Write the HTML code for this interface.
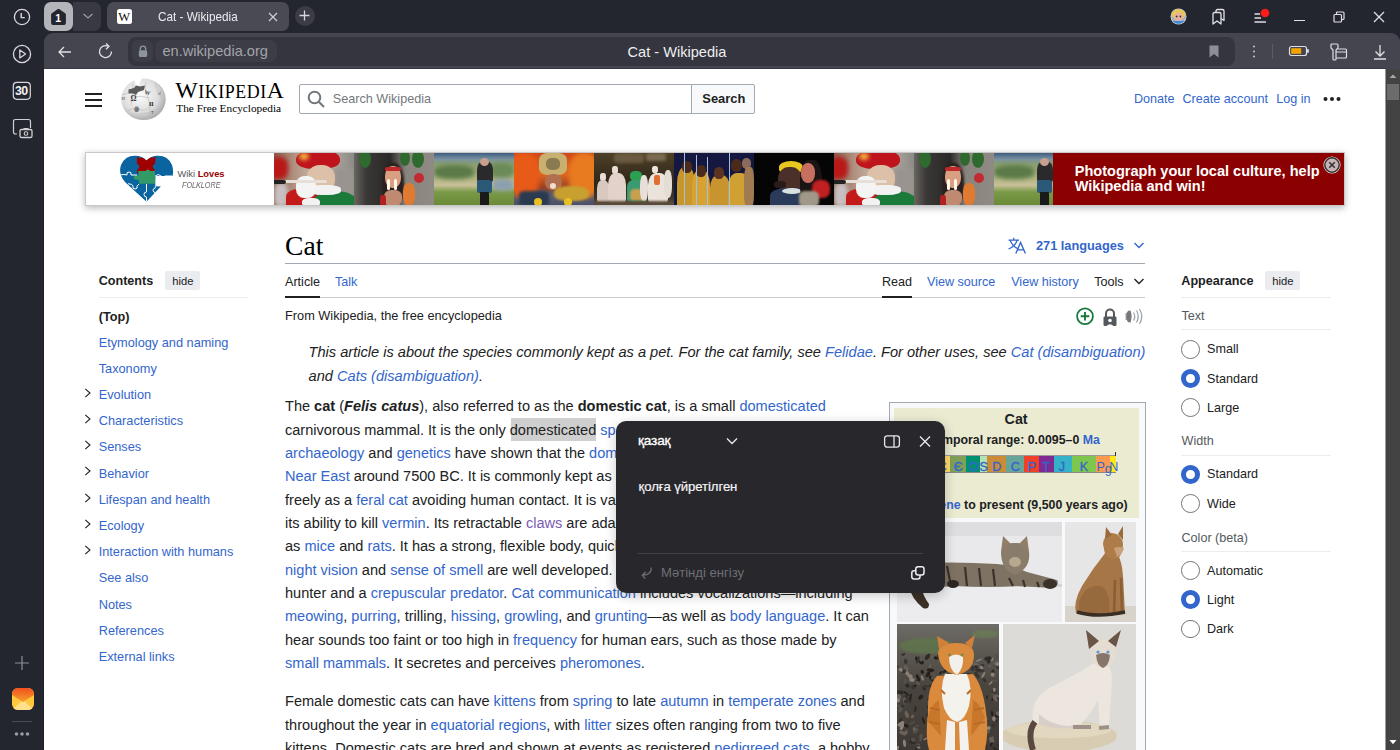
<!DOCTYPE html>
<html><head><meta charset="utf-8"><style>
*{box-sizing:border-box;margin:0;padding:0}
html,body{width:1400px;height:750px;overflow:hidden;background:#23262f;font-family:"Liberation Sans",sans-serif;color:#202122}
.a{position:absolute}
.nw{white-space:nowrap}
.lk{color:#3366cc}
.vl{color:#795cb2}
b{font-weight:bold}
</style></head><body>
<div class="a" style="left:0px;top:0px;width:1400px;height:750px;background:#23262f"></div>
<div class="a" style="left:44px;top:33px;width:1356px;height:36px;background:#45454f;border-radius:9px 9px 0 0"></div>
<div class="a" style="left:44px;top:69px;width:1342px;height:681px;background:#fff"></div>
<div class="a" style="left:1386px;top:69px;width:14px;height:681px;background:#434343"></div>
<div class="a" style="left:1385px;top:69px;width:1px;height:681px;background:#9a9a9a"></div>
<div class="a" style="left:1387px;top:84px;width:12px;height:16px;background:#6c6c6c"></div>
<svg class="a" style="left:1387px;top:71px;" width="12" height="10" viewBox="0 0 12 10"><path d="M2.5 7 L6 3.5 L9.5 7 Z" fill="#a8a8a8"/></svg>
<svg class="a" style="left:1387px;top:738px;" width="12" height="10" viewBox="0 0 12 10"><path d="M2.5 2 L6 6.2 L9.5 2 Z" fill="#fff"/></svg>
<div class="a" style="left:43px;top:69px;width:1px;height:681px;background:#1e2029"></div>
<div class="a" style="left:44px;top:68px;width:1342px;height:1px;background:#383942"></div>
<svg class="a" style="left:10px;top:5px;" width="24" height="24" viewBox="0 0 24 24"><circle cx="12" cy="12" r="7.6" fill="none" stroke="#d8d8dc" stroke-width="1.3"/><path d="M11.2 8 V12.6 H14.8" fill="none" stroke="#d8d8dc" stroke-width="1.4"/></svg>
<svg class="a" style="left:10px;top:42px;" width="24" height="24" viewBox="0 0 24 24"><circle cx="12" cy="12" r="8.6" fill="none" stroke="#d8d8dc" stroke-width="1.3"/><path d="M9.8 8 L15.6 12 L9.8 16 Z" fill="none" stroke="#d8d8dc" stroke-width="1.3" stroke-linejoin="round"/></svg>
<svg class="a" style="left:12px;top:81px;" width="20" height="20" viewBox="0 0 20 20"><rect x="1.3" y="1.3" width="17" height="17" rx="3.5" fill="none" stroke="#d8d8dc" stroke-width="1.2"/></svg>
<div class="a nw " style="left:15.00px;top:81.30px;font-size:12.4px;line-height:20px;font-family:'Liberation Sans',sans-serif;color:#f0f0f2;font-weight:bold;letter-spacing:-0.6px">30</div>
<svg class="a" style="left:11px;top:117px;" width="24" height="22" viewBox="0 0 24 22"><path d="M6 17 H4.5 Q2.5 17 2.5 15 V4.5 Q2.5 2.5 4.5 2.5 H17.5 Q19.5 2.5 19.5 4.5 V11" fill="none" stroke="#cfcfd3" stroke-width="1.2"/><rect x="9" y="12.5" width="12" height="8" rx="1.6" fill="#23262f" stroke="#cfcfd3" stroke-width="1.3"/><rect x="12.5" y="11" width="5" height="2" fill="#cfcfd3"/><circle cx="15" cy="16.5" r="1.8" fill="none" stroke="#cfcfd3" stroke-width="1.1"/></svg>
<svg class="a" style="left:14px;top:655px;" width="16" height="16" viewBox="0 0 16 16"><path d="M8 1 V15 M1 8 H15" stroke="#8e8f95" stroke-width="1.2"/></svg>
<svg class="a" style="left:11.5px;top:687.5px;" width="22" height="22" viewBox="0 0 22 22"><defs><clipPath id="mlc"><rect width="22" height="22" rx="6"/></clipPath><linearGradient id="mlg" x1="0" y1="0" x2="0" y2="1"><stop offset="0" stop-color="#f0501e"/><stop offset="1" stop-color="#f7a02c"/></linearGradient></defs><g clip-path="url(#mlc)"><rect width="22" height="22" fill="#ffc83c"/><path d="M0 22 L11 12 L22 22 Z" fill="#ffe08a"/><path d="M0 0 H22 V7 L11 14 L0 7 Z" fill="url(#mlg)"/></g></svg>
<div class="a" style="left:12px;top:721px;width:20px;height:1px;background:#4a4c55"></div>
<svg class="a" style="left:13px;top:729px;" width="18" height="10" viewBox="0 0 18 10"><circle cx="3.5" cy="5" r="1.8" fill="#9a9ba0"/><circle cx="9" cy="5" r="1.8" fill="#9a9ba0"/><circle cx="14.5" cy="5" r="1.8" fill="#9a9ba0"/></svg>
<div class="a" style="left:44px;top:2px;width:29px;height:28.5px;background:#b4b5ba;border-radius:7px"></div>
<div class="a" style="left:73px;top:2px;width:28px;height:28.5px;background:#383943;border-radius:0 7px 7px 0"></div>
<svg class="a" style="left:50px;top:8px;" width="17" height="18" viewBox="0 0 17 18"><path d="M8.5 2 L14.8 6.5 V14.5 Q14.8 16 13.3 16 H3.7 Q2.2 16 2.2 14.5 V6.5 Z" fill="#23262f" stroke="#23262f" stroke-width="2.2" stroke-linejoin="round"/></svg>
<div class="a nw " style="left:55.30px;top:7.66px;font-size:10.5px;line-height:20px;font-family:'Liberation Sans',sans-serif;color:#fff;font-weight:bold">1</div>
<svg class="a" style="left:82px;top:12px;" width="12" height="8" viewBox="0 0 12 8"><path d="M1.5 2 L6 6 L10.5 2" fill="none" stroke="#9c9ca3" stroke-width="1.2"/></svg>
<div class="a" style="left:106.5px;top:2px;width:182.5px;height:29px;background:#4a4a54;border-radius:7px"></div>
<div class="a" style="left:117px;top:9px;width:15px;height:15px;background:#fff;border-radius:2.5px"></div>
<div class="a nw " style="left:118.20px;top:6.78px;font-size:12.5px;line-height:20px;font-family:'Liberation Serif',serif;color:#111;font-family:'Liberation Serif',serif">W</div>
<div class="a nw " style="left:157.50px;top:6.75px;font-size:13.4px;line-height:20px;font-family:'Liberation Sans',sans-serif;color:#ececf0;transform:scaleX(0.878);transform-origin:0 0">Cat - Wikipedia</div>
<svg class="a" style="left:267px;top:11px;" width="12" height="12" viewBox="0 0 12 12"><path d="M2 2 L10 10 M10 2 L2 10" stroke="#d0d0d4" stroke-width="1.2"/></svg>
<div class="a" style="left:294.5px;top:5.5px;width:20px;height:20px;border-radius:50%;background:#3b3c45"></div>
<svg class="a" style="left:297px;top:8px;" width="15" height="15" viewBox="0 0 15 15"><path d="M7.5 2.5 V12.5 M2.5 7.5 H12.5" stroke="#d8d8dc" stroke-width="1.3"/></svg>
<svg class="a" style="left:1170px;top:8px;" width="17" height="17" viewBox="0 0 17 17"><defs><clipPath id="avc"><circle cx="8.5" cy="8.5" r="7.3"/></clipPath></defs><circle cx="8.5" cy="8.5" r="8" fill="#d8d4c8"/><g clip-path="url(#avc)"><rect width="17" height="17" fill="#9ab0c8"/><ellipse cx="8.5" cy="6" rx="7" ry="6" fill="#e8c850"/><ellipse cx="8.5" cy="9" rx="4.6" ry="4.4" fill="#e8b0a0"/><circle cx="6.6" cy="8.5" r="0.9" fill="#333"/><circle cx="10.4" cy="8.5" r="0.9" fill="#333"/><rect x="3" y="13" width="11" height="5" fill="#3a8ad8"/></g></svg>
<svg class="a" style="left:1209px;top:8px;" width="18" height="18" viewBox="0 0 18 18"><path d="M4 16 V6 Q4 4.5 5.5 4.5 H10.5 Q12 4.5 12 6 V16 L8 13 Z" fill="none" stroke="#e0e0e4" stroke-width="1.3" stroke-linejoin="round"/><path d="M7 4.5 V3 Q7 1.5 8.5 1.5 H13.5 Q15 1.5 15 3 V12.5 L12 10.5" fill="none" stroke="#e0e0e4" stroke-width="1.3" stroke-linejoin="round"/></svg>
<svg class="a" style="left:1252px;top:6px;" width="22" height="18" viewBox="0 0 22 18"><path d="M2.5 8 H8 M2.5 12 H9 M2.5 16 H14" stroke="#e0e0e4" stroke-width="1.3"/><circle cx="13" cy="7" r="4.3" fill="#ff1a1a"/></svg>
<div class="a" style="left:1294px;top:20px;width:11px;height:1.3px;background:#e0e0e4"></div>
<svg class="a" style="left:1332px;top:10px;" width="14" height="14" viewBox="0 0 14 14"><rect x="2" y="4.5" width="7.5" height="7.5" rx="1" fill="none" stroke="#e0e0e4" stroke-width="1.2"/><path d="M4.5 4.5 V3 Q4.5 2 5.5 2 H11 Q12 2 12 3 V8.5 Q12 9.5 11 9.5 H9.5" fill="none" stroke="#e0e0e4" stroke-width="1.2"/></svg>
<svg class="a" style="left:1372px;top:10px;" width="14" height="14" viewBox="0 0 14 14"><path d="M2 2 L12 12 M12 2 L2 12" stroke="#e0e0e4" stroke-width="1.3"/></svg>
<svg class="a" style="left:56px;top:43px;" width="18" height="18" viewBox="0 0 18 18"><path d="M15 9 H3 M8 4 L3 9 L8 14" fill="none" stroke="#e0e0e4" stroke-width="1.3"/></svg>
<svg class="a" style="left:96px;top:42px;" width="20" height="20" viewBox="0 0 20 20"><path d="M15.5 9.5 A6 6 0 1 1 12 4.2" fill="none" stroke="#e0e0e4" stroke-width="1.3"/><path d="M10 1.5 L13 4.3 L10 7.2" fill="none" stroke="#e0e0e4" stroke-width="1.3"/></svg>
<div class="a" style="left:128px;top:37px;width:1107px;height:28.5px;background:#34353e;border-radius:8px"></div>
<div class="a" style="left:132px;top:40px;width:21px;height:22.3px;background:#3c3d46;border-radius:6px"></div>
<div class="a" style="left:155px;top:40px;width:122px;height:22.3px;background:#3c3d46;border-radius:7px"></div>
<svg class="a" style="left:136px;top:44px;" width="14" height="14" viewBox="0 0 14 14"><path d="M4.3 6.5 V4.8 A2.7 2.7 0 0 1 9.7 4.8 V6.5" fill="none" stroke="#8d949c" stroke-width="1.4"/><rect x="2.8" y="6.3" width="8.4" height="6.8" rx="1.5" fill="#8d949c"/></svg>
<div class="a nw " style="left:162.50px;top:41.44px;font-size:14.6px;line-height:20px;font-family:'Liberation Sans',sans-serif;color:#a3a4aa">en.wikipedia.org</div>
<div class="a nw " style="left:627.50px;top:42.44px;font-size:14.6px;line-height:20px;font-family:'Liberation Sans',sans-serif;color:#eeeef0">Cat - Wikipedia</div>
<svg class="a" style="left:1207px;top:44px;" width="14" height="15" viewBox="0 0 14 15"><path d="M2.5 1.5 H11.5 V13.5 L7 10 L2.5 13.5 Z" fill="#8e8f96"/></svg>
<svg class="a" style="left:1250px;top:44px;" width="8" height="15" viewBox="0 0 8 15"><circle cx="4" cy="2.5" r="1" fill="#c8c8cc"/><circle cx="4" cy="7.5" r="1" fill="#c8c8cc"/><circle cx="4" cy="12.5" r="1" fill="#c8c8cc"/></svg>
<div class="a" style="left:1272px;top:44px;width:1px;height:15px;background:#5a5b64"></div>
<svg class="a" style="left:1288px;top:44px;" width="22" height="14" viewBox="0 0 22 14"><rect x="1.5" y="2.5" width="17" height="9" rx="2" fill="none" stroke="#e0e0e4" stroke-width="1.2"/><rect x="3.2" y="4.2" width="10" height="5.6" fill="#f5a300"/><rect x="19" y="5.3" width="1.8" height="3.4" fill="#e0e0e4"/></svg>
<svg class="a" style="left:1328px;top:42px;" width="20" height="20" viewBox="0 0 20 20"><path d="M3 3 Q3 2 4 2 H9 Q10 2 10 3 V6 L8 8 V17 Q8 18 7 18 H6 Q5 18 5 17 V8 L3 6 Z" fill="none" stroke="#e0e0e4" stroke-width="1.2"/><path d="M10 7 H17.5 Q18.5 7 18.5 8 V15 Q18.5 16 17.5 16 H8 M8 10 H18.5" fill="none" stroke="#e0e0e4" stroke-width="1.2"/></svg>
<svg class="a" style="left:1371px;top:43px;" width="18" height="18" viewBox="0 0 18 18"><path d="M9 2 V13 M4.5 8.5 L9 13 L13.5 8.5 M3 16 H15" fill="none" stroke="#e0e0e4" stroke-width="1.3"/></svg>
<div class="a" style="left:84.5px;top:92.5px;width:17px;height:2px;background:#202122"></div>
<div class="a" style="left:84.5px;top:98.5px;width:17px;height:2px;background:#202122"></div>
<div class="a" style="left:84.5px;top:104.5px;width:17px;height:2px;background:#202122"></div>
<svg class="a" style="left:119px;top:77px" width="48" height="46" viewBox="0 0 48 46">
<defs><radialGradient id="gg" cx="0.42" cy="0.4" r="0.68"><stop offset="0" stop-color="#fbfbfb"/><stop offset="0.6" stop-color="#dedede"/><stop offset="1" stop-color="#9a9a9a"/></radialGradient></defs>
<ellipse cx="24.5" cy="22.3" rx="22.2" ry="20.8" fill="url(#gg)"/>
<path d="M14.5 0.5 L16.8 8.5 L19.8 8.5 L23.5 0.5 Z" fill="#fff"/>
<path d="M3 18 Q9 17 12 13 M8 34 Q14 30 20 32 Q26 35 30 30 M27 5 Q25 14 29 21 Q33 30 29 42 M14 7 Q15 18 12 28 M36 6 Q38 15 43 22 M14 20 Q22 18 30 21 M20 37 Q30 35 41 36" fill="none" stroke="#bdbdbd" stroke-width="0.7"/>
<path d="M9.5 12.5 L15 11 L17 8.5 L21 9.5 L26 8.5 L25 13 L19 15 L17 18 L14 16.5 L9.5 16.5 Z" fill="#5a5a5a"/>
<text x="11.5" y="23.8" font-family="Liberation Serif" font-size="7.5" font-weight="bold" fill="#3a3a3a">Ω</text>
<text x="25.5" y="17.5" font-family="Liberation Serif" font-size="6" font-weight="bold" fill="#555" transform="rotate(15 28 15)">W</text>
<text x="30" y="28.5" font-family="Liberation Serif" font-size="8" font-weight="bold" fill="#333">ıı</text>
<text x="15" y="33.5" font-family="Liberation Serif" font-size="6" font-weight="bold" fill="#555">ꙮ</text>
<text x="32" y="36.5" font-family="Liberation Serif" font-size="5" font-weight="bold" fill="#444">7</text>
<text x="2.5" y="22.5" font-family="Liberation Serif" font-size="5" fill="#666">И</text>
<text x="39" y="18" font-family="Liberation Serif" font-size="5" fill="#777">Ꮷ</text>
</svg>
<div class="a nw " style="left:175.30px;top:80.47px;font-size:23.8px;line-height:20px;font-family:'Liberation Serif',serif;color:#000;letter-spacing:0.55px">W<span style="font-size:17.9px">IKIPEDI</span>A</div>
<div class="a nw " style="left:176.30px;top:98.19px;font-size:11.3px;line-height:20px;font-family:'Liberation Serif',serif;color:#000">The Free Encyclopedia</div>
<div class="a" style="left:299px;top:84px;width:393px;height:30px;border:1px solid #a2a9b1;border-radius:2px 0 0 2px;background:#fff"></div>
<svg class="a" style="left:306px;top:89px;" width="22" height="22" viewBox="0 0 22 22"><circle cx="8.5" cy="8.5" r="5.8" fill="none" stroke="#72777d" stroke-width="2"/><path d="M12.8 12.8 L18 18" stroke="#72777d" stroke-width="2"/></svg>
<div class="a nw " style="left:332.80px;top:89.12px;font-size:12.63px;line-height:20px;font-family:'Liberation Sans',sans-serif;color:#72777d">Search Wikipedia</div>
<div class="a" style="left:691px;top:84px;width:64px;height:30px;border:1px solid #a2a9b1;border-radius:0 2px 2px 0;background:#f8f9fa"></div>
<div class="a nw " style="left:702.30px;top:89.03px;font-size:12.9px;line-height:20px;font-family:'Liberation Sans',sans-serif;color:#202122;font-weight:bold">Search</div>
<div class="a nw lk" style="left:1134.00px;top:89.13px;font-size:12.6px;line-height:20px;font-family:'Liberation Sans',sans-serif;">Donate</div>
<div class="a nw lk" style="left:1182.50px;top:89.13px;font-size:12.6px;line-height:20px;font-family:'Liberation Sans',sans-serif;">Create account</div>
<div class="a nw lk" style="left:1276.30px;top:89.13px;font-size:12.6px;line-height:20px;font-family:'Liberation Sans',sans-serif;">Log in</div>
<svg class="a" style="left:1322px;top:94px;" width="20" height="10" viewBox="0 0 20 10"><circle cx="3.5" cy="5" r="2" fill="#202122"/><circle cx="10" cy="5" r="2" fill="#202122"/><circle cx="16.5" cy="5" r="2" fill="#202122"/></svg>
<div class="a" style="left:84.5px;top:151.5px;width:1260.5px;height:54.5px;background:#fff;border:1px solid #c8c8c8;box-shadow:0 2px 7px rgba(0,0,0,0.28)"></div>
<svg class="a" style="left:119px;top:154px" width="56" height="50" viewBox="0 0 56 50">
<defs><clipPath id="hc"><path d="M27.5 47.8 L6 28 Q-1 20 2 11 Q6 1.5 16.5 1.8 Q23 2 27.5 6.5 Q32 2 38.5 1.8 Q49 1.5 53 11 Q55 17 53.5 22 L36.3 22 L36.3 32.2 L42 32.2 Z"/></clipPath></defs>
<g clip-path="url(#hc)">
<rect width="56" height="50" fill="#0a64a0"/>
<path d="M17.8 3 Q22 5 24 3 Q27 6 31 3 Q34 4 36.7 3 L36 10 Q33 11 34 13.5 Q36 15 36 19 L30 19 Q29 22 26 22 Q23 21 24 19 L18 19 Q18 15 20 13.5 Q21 11 18 10 Z" fill="#a00000"/>
<path d="M19 17 L27 17 Q27 15 29 15.5 Q31 16 31 17 L36 17 L36 21 Q39 21 39 23.5 Q39 26 36 26 L36 29.7 L20 29.7 L20 26 Q14.5 26 14.5 23.5 Q14.5 21 20 21 Z" fill="#339966"/>
<path d="M0 21 Q6 20 8 21 Q7 18 10 18 Q13 18 12 21 L18 21 M9 29.7 Q14 30 14 32 Q13 35 16 35 Q19 35 18 32 L20 30 M27.5 30 L27.5 38 Q25 38 25 40.5 Q25 43 27.5 43 L27.5 50 M36.3 22 Q39 19 42 22 Q44 25 46 22 L53 22 M36.3 32.2 L36.3 34 Q34 34.5 34 36.5 Q34.5 39 37 38.5 L40 37" fill="none" stroke="#fff" stroke-width="1"/>
</g>
<path d="M38 32.2 L42.5 32.2 L45 29.5 L41 29.5 Q40 26 42 24 L52 22 Z" fill="#fff"/>
</svg>
<div class="a nw " style="left:177.50px;top:164.28px;font-size:9.3px;line-height:20px;font-family:'Liberation Sans',sans-serif;color:#555">Wiki <b style="color:#990000">Loves</b></div>
<div class="a nw " style="left:182.30px;top:175.02px;font-size:8.6px;line-height:20px;font-family:'Liberation Sans',sans-serif;color:#666;font-style:italic;transform:scaleX(0.84);transform-origin:0 0">FOLKLORE</div>
<div class="a" style="left:274.3px;top:152.5px;width:80px;height:52.5px;background:linear-gradient(90deg,#8a5a4a 0%,#b09080 25%,#c8b8a8 50%,#a8a098 80%,#8a8a88 100%);overflow:hidden"><div class="a" style="left:-4px;top:4px;width:18px;height:22px;background:#b81818;border-radius:40%;filter:blur(2px);"></div><div class="a" style="left:0px;top:30px;width:14px;height:24px;background:#c8c0c0;border-radius:30%;filter:blur(2px);"></div><div class="a" style="left:60px;top:15px;width:20px;height:40px;background:#9a9490;border-radius:10%;filter:blur(2px);"></div><div class="a" style="left:22px;top:-4px;width:44px;height:20px;background:#c0141c;border-radius:50% 50% 40% 40%;filter:blur(0.6px);"></div><div class="a" style="left:33px;top:12px;width:28px;height:27px;background:#dcc0a8;border-radius:45%;filter:blur(0.6px);"></div><div class="a" style="left:12px;top:36px;width:32px;height:20px;background:#c41a1a;border-radius:40% 40% 0 0;filter:blur(0.6px);"></div><div class="a" style="left:40px;top:38px;width:42px;height:18px;background:#1a7a3a;border-radius:50% 50% 0 0;filter:blur(0.6px);"></div><div class="a" style="left:35px;top:32px;width:32px;height:10px;background:#f2f2f2;border-radius:40%;filter:blur(0.6px);"></div><div class="a" style="left:22px;top:23px;width:20px;height:22px;background:#f4f4f4;border-radius:40%;filter:blur(0.6px);"></div><div class="a" style="left:3px;top:27px;width:50px;height:3px;background:#e8e0d8;border-radius:2px;filter:blur(0.3px);"></div><div class="a" style="left:28px;top:45px;width:18px;height:9px;background:#f2f2f2;border-radius:40%;filter:blur(0.6px);"></div><div class="a" style="left:-2px;top:27px;width:14px;height:4px;background:#222;border-radius:2px;filter:blur(0.4px);"></div><div class="a" style="left:25px;top:0px;width:10px;height:7px;background:#f0c040;border-radius:50%;filter:blur(2px);"></div></div>
<div class="a" style="left:354.4px;top:152.5px;width:80px;height:52.5px;background:linear-gradient(90deg,#6a6660 0%,#3a3836 15%,#2a2826 45%,#8a847e 65%,#908a84 100%);overflow:hidden"><div class="a" style="left:5px;top:-3px;width:12px;height:18px;background:#2e6a2e;border-radius:50%;filter:blur(0.6px);"></div><div class="a" style="left:46px;top:-3px;width:10px;height:16px;background:#2e6a2e;border-radius:50%;filter:blur(0.6px);"></div><div class="a" style="left:58px;top:-3px;width:12px;height:18px;background:#2e6a2e;border-radius:50%;filter:blur(0.6px);"></div><div class="a" style="left:28px;top:10px;width:22px;height:44px;background:#2a2020;border-radius:45%;filter:blur(1px);"></div><div class="a" style="left:31px;top:13px;width:16px;height:22px;background:#d8a080;border-radius:45%;filter:blur(0.6px);"></div><div class="a" style="left:31px;top:14px;width:16px;height:4px;background:#c02a2a;border-radius:30%;filter:blur(0.4px);"></div><div class="a" style="left:33px;top:26px;width:3px;height:11px;background:#fff8e8;border-radius:2px;filter:blur(0.4px);"></div><div class="a" style="left:40px;top:26px;width:3px;height:11px;background:#fff8e8;border-radius:2px;filter:blur(0.4px);"></div><div class="a" style="left:30px;top:37px;width:18px;height:16px;background:#c08a70;border-radius:40%;filter:blur(0.6px);"></div><div class="a" style="left:49px;top:30px;width:12px;height:22px;background:#e07a30;border-radius:40%;filter:blur(0.6px);"></div><div class="a" style="left:60px;top:20px;width:10px;height:10px;background:#c02a30;border-radius:50%;filter:blur(0.6px);"></div><div class="a" style="left:26px;top:42px;width:6px;height:12px;background:#b02020;border-radius:30%;filter:blur(0.6px);"></div></div>
<div class="a" style="left:434px;top:152.5px;width:80px;height:52.5px;background:linear-gradient(180deg,#3e5e80 0%,#7a92a0 12%,#8aa070 22%,#a8b078 45%,#c8c098 62%,#7a9a48 75%,#6a8a38 100%);overflow:hidden"><div class="a" style="left:0px;top:12px;width:40px;height:14px;background:#5a7a48;border-radius:40%;filter:blur(2px);"></div><div class="a" style="left:55px;top:10px;width:25px;height:15px;background:#6a8a58;border-radius:40%;filter:blur(2px);"></div><div class="a" style="left:58px;top:26px;width:22px;height:12px;background:#8aa0b0;border-radius:40%;filter:blur(2px);"></div><div class="a" style="left:43px;top:8px;width:16px;height:22px;background:#2a2a2c;border-radius:40% 40% 20% 20%;filter:blur(0.6px);"></div><div class="a" style="left:46px;top:5px;width:9px;height:8px;background:#c8a090;border-radius:50%;filter:blur(0.6px);"></div><div class="a" style="left:43px;top:27px;width:15px;height:13px;background:#2a5a78;border-radius:20%;filter:blur(0.6px);"></div><div class="a" style="left:46px;top:39px;width:9px;height:14px;background:#1a1a1a;border-radius:10%;filter:blur(0.5px);"></div></div>
<div class="a" style="left:513.8px;top:152.5px;width:80px;height:52.5px;background:linear-gradient(180deg,#d04818 0%,#e06a20 40%,#a04020 65%,#5a6070 80%,#4a5068 100%);overflow:hidden"><div class="a" style="left:-5px;top:0px;width:30px;height:45px;background:#e85a18;border-radius:40%;filter:blur(2px);"></div><div class="a" style="left:55px;top:0px;width:30px;height:45px;background:#e87a20;border-radius:40%;filter:blur(2px);"></div><div class="a" style="left:25px;top:0px;width:28px;height:22px;background:#c8b070;border-radius:30%;filter:blur(0.6px);"></div><div class="a" style="left:32px;top:5px;width:14px;height:12px;background:#8a7a50;border-radius:40%;filter:blur(0.6px);"></div><div class="a" style="left:31px;top:21px;width:17px;height:16px;background:#b07050;border-radius:45%;filter:blur(0.6px);"></div><div class="a" style="left:36px;top:30px;width:6px;height:6px;background:#f0e0d0;border-radius:50%;filter:blur(0.5px);"></div><div class="a" style="left:40px;top:33px;width:35px;height:15px;background:#c8a030;border-radius:40%;filter:blur(1.2px);"></div><div class="a" style="left:5px;top:38px;width:30px;height:15px;background:#2a3a50;border-radius:20%;filter:blur(1.5px);"></div><div class="a" style="left:20px;top:45px;width:8px;height:8px;background:#e8c020;border-radius:50%;filter:blur(0.6px);"></div><div class="a" style="left:50px;top:45px;width:8px;height:8px;background:#e8c020;border-radius:50%;filter:blur(0.6px);"></div></div>
<div class="a" style="left:593.8px;top:152.5px;width:80px;height:52.5px;background:linear-gradient(180deg,#4e4026 0%,#3e3220 30%,#2e2618 60%,#3a3428 85%,#5a5040 100%);overflow:hidden"><div class="a" style="left:20px;top:0px;width:30px;height:10px;background:#6a5a40;border-radius:20%;filter:blur(1.5px);"></div><div class="a" style="left:52px;top:0px;width:20px;height:8px;background:#7a6a50;border-radius:20%;filter:blur(1.5px);"></div><div class="a" style="left:6px;top:20px;width:6px;height:8px;background:#e8dcd4;border-radius:40%;filter:blur(0.5px);"></div><div class="a" style="left:3px;top:27px;width:12px;height:22px;background:#d8c8c0;border-radius:40% 40% 10% 10%;filter:blur(0.6px);"></div><div class="a" style="left:18px;top:13px;width:6px;height:8px;background:#e8dcd4;border-radius:40%;filter:blur(0.5px);"></div><div class="a" style="left:14px;top:20px;width:18px;height:30px;background:#e2d2ca;border-radius:40% 40% 15% 15%;filter:blur(0.6px);"></div><div class="a" style="left:36px;top:18px;width:12px;height:10px;background:#2aa050;border-radius:40%;filter:blur(0.5px);"></div><div class="a" style="left:33px;top:27px;width:20px;height:22px;background:#3a9a70;border-radius:30% 30% 10% 10%;filter:blur(0.6px);"></div><div class="a" style="left:36px;top:36px;width:16px;height:12px;background:#c8a050;border-radius:30%;filter:blur(0.8px);"></div><div class="a" style="left:46px;top:22px;width:8px;height:26px;background:#e8e0d8;border-radius:40%;filter:blur(0.6px);"></div><div class="a" style="left:58px;top:13px;width:6px;height:7px;background:#ece4dc;border-radius:40%;filter:blur(0.5px);"></div><div class="a" style="left:54px;top:20px;width:20px;height:30px;background:#ebe4dc;border-radius:40% 40% 15% 15%;filter:blur(0.6px);"></div><div class="a" style="left:60px;top:22px;width:6px;height:10px;background:#e07030;border-radius:30%;filter:blur(0.5px);"></div><div class="a" style="left:70px;top:17px;width:8px;height:28px;background:#e4ddd4;border-radius:40%;filter:blur(0.6px);"></div><div class="a" style="left:0px;top:48px;width:80px;height:6px;background:#5a4a38;border-radius:0;filter:blur(1px);"></div></div>
<div class="a" style="left:673.8px;top:152.5px;width:80px;height:52.5px;background:#141840;overflow:hidden"><div class="a" style="left:3px;top:14px;width:18px;height:40px;background:#c8962a;border-radius:40% 40% 0 0;filter:blur(0.6px);"></div><div class="a" style="left:18px;top:17px;width:18px;height:38px;background:#d8a232;border-radius:40% 40% 0 0;filter:blur(0.6px);"></div><div class="a" style="left:36px;top:22px;width:20px;height:33px;background:#c89430;border-radius:40% 40% 0 0;filter:blur(0.6px);"></div><div class="a" style="left:54px;top:20px;width:22px;height:35px;background:#d0a032;border-radius:40% 40% 0 0;filter:blur(0.6px);"></div><div class="a" style="left:8px;top:8px;width:10px;height:12px;background:#4a2a1a;border-radius:45%;filter:blur(0.5px);"></div><div class="a" style="left:22px;top:12px;width:10px;height:12px;background:#4a2a1a;border-radius:45%;filter:blur(0.5px);"></div><div class="a" style="left:40px;top:14px;width:10px;height:12px;background:#5a3420;border-radius:45%;filter:blur(0.5px);"></div><div class="a" style="left:57px;top:6px;width:11px;height:13px;background:#4a2a1a;border-radius:45%;filter:blur(0.5px);"></div><div class="a" style="left:68px;top:5px;width:9px;height:11px;background:#8a6a5a;border-radius:45%;filter:blur(0.5px);"></div><div class="a" style="left:70px;top:14px;width:10px;height:40px;background:#a07a50;border-radius:30%;filter:blur(0.6px);"></div><div class="a" style="left:10px;top:0px;width:1.5px;height:53px;background:#a0c0e0;border-radius:0;filter:blur(0.3px);"></div><div class="a" style="left:22px;top:2px;width:1.5px;height:51px;background:#a0c0e0;border-radius:0;filter:blur(0.3px);"></div><div class="a" style="left:33px;top:4px;width:1.5px;height:49px;background:#a0c0e0;border-radius:0;filter:blur(0.3px);"></div><div class="a" style="left:55px;top:0px;width:1.5px;height:53px;background:#a0c0e0;border-radius:0;filter:blur(0.3px);"></div></div>
<div class="a" style="left:753.5px;top:152.5px;width:80px;height:52.5px;background:#050506;overflow:hidden"><div class="a" style="left:25px;top:8px;width:24px;height:12px;background:#e8c820;border-radius:50% 50% 30% 30%;filter:blur(0.6px);"></div><div class="a" style="left:24px;top:14px;width:24px;height:26px;background:#4a3028;border-radius:45%;filter:blur(0.6px);"></div><div class="a" style="left:20px;top:28px;width:12px;height:7px;background:#2a1a18;border-radius:40%;filter:blur(0.5px);"></div><div class="a" style="left:16px;top:35px;width:40px;height:20px;background:#2a3a5a;border-radius:40% 40% 0 0;filter:blur(0.6px);"></div><div class="a" style="left:28px;top:35px;width:20px;height:6px;background:#d8e0e0;border-radius:50%;filter:blur(0.4px);"></div><div class="a" style="left:46px;top:7px;width:22px;height:46px;background:#1a1414;border-radius:40%;filter:blur(0.6px);"></div><div class="a" style="left:47px;top:10px;width:14px;height:20px;background:#c87060;border-radius:45%;filter:blur(0.6px);"></div><div class="a" style="left:58px;top:27px;width:18px;height:18px;background:#c02020;border-radius:40%;filter:blur(0.8px);"></div><div class="a" style="left:45px;top:38px;width:20px;height:16px;background:#a09888;border-radius:30%;filter:blur(0.8px);"></div></div>
<div class="a" style="left:833.5px;top:152.5px;width:80px;height:52.5px;background:linear-gradient(90deg,#8a5a4a 0%,#b09080 25%,#c8b8a8 50%,#a8a098 80%,#8a8a88 100%);overflow:hidden"><div class="a" style="left:-4px;top:4px;width:18px;height:22px;background:#b81818;border-radius:40%;filter:blur(2px);"></div><div class="a" style="left:0px;top:30px;width:14px;height:24px;background:#c8c0c0;border-radius:30%;filter:blur(2px);"></div><div class="a" style="left:60px;top:15px;width:20px;height:40px;background:#9a9490;border-radius:10%;filter:blur(2px);"></div><div class="a" style="left:22px;top:-4px;width:44px;height:20px;background:#c0141c;border-radius:50% 50% 40% 40%;filter:blur(0.6px);"></div><div class="a" style="left:33px;top:12px;width:28px;height:27px;background:#dcc0a8;border-radius:45%;filter:blur(0.6px);"></div><div class="a" style="left:12px;top:36px;width:32px;height:20px;background:#c41a1a;border-radius:40% 40% 0 0;filter:blur(0.6px);"></div><div class="a" style="left:40px;top:38px;width:42px;height:18px;background:#1a7a3a;border-radius:50% 50% 0 0;filter:blur(0.6px);"></div><div class="a" style="left:35px;top:32px;width:32px;height:10px;background:#f2f2f2;border-radius:40%;filter:blur(0.6px);"></div><div class="a" style="left:22px;top:23px;width:20px;height:22px;background:#f4f4f4;border-radius:40%;filter:blur(0.6px);"></div><div class="a" style="left:3px;top:27px;width:50px;height:3px;background:#e8e0d8;border-radius:2px;filter:blur(0.3px);"></div><div class="a" style="left:28px;top:45px;width:18px;height:9px;background:#f2f2f2;border-radius:40%;filter:blur(0.6px);"></div><div class="a" style="left:-2px;top:27px;width:14px;height:4px;background:#222;border-radius:2px;filter:blur(0.4px);"></div><div class="a" style="left:25px;top:0px;width:10px;height:7px;background:#f0c040;border-radius:50%;filter:blur(2px);"></div></div>
<div class="a" style="left:913.5px;top:152.5px;width:80px;height:52.5px;background:linear-gradient(90deg,#6a6660 0%,#3a3836 15%,#2a2826 45%,#8a847e 65%,#908a84 100%);overflow:hidden"><div class="a" style="left:5px;top:-3px;width:12px;height:18px;background:#2e6a2e;border-radius:50%;filter:blur(0.6px);"></div><div class="a" style="left:46px;top:-3px;width:10px;height:16px;background:#2e6a2e;border-radius:50%;filter:blur(0.6px);"></div><div class="a" style="left:58px;top:-3px;width:12px;height:18px;background:#2e6a2e;border-radius:50%;filter:blur(0.6px);"></div><div class="a" style="left:28px;top:10px;width:22px;height:44px;background:#2a2020;border-radius:45%;filter:blur(1px);"></div><div class="a" style="left:31px;top:13px;width:16px;height:22px;background:#d8a080;border-radius:45%;filter:blur(0.6px);"></div><div class="a" style="left:31px;top:14px;width:16px;height:4px;background:#c02a2a;border-radius:30%;filter:blur(0.4px);"></div><div class="a" style="left:33px;top:26px;width:3px;height:11px;background:#fff8e8;border-radius:2px;filter:blur(0.4px);"></div><div class="a" style="left:40px;top:26px;width:3px;height:11px;background:#fff8e8;border-radius:2px;filter:blur(0.4px);"></div><div class="a" style="left:30px;top:37px;width:18px;height:16px;background:#c08a70;border-radius:40%;filter:blur(0.6px);"></div><div class="a" style="left:49px;top:30px;width:12px;height:22px;background:#e07a30;border-radius:40%;filter:blur(0.6px);"></div><div class="a" style="left:60px;top:20px;width:10px;height:10px;background:#c02a30;border-radius:50%;filter:blur(0.6px);"></div><div class="a" style="left:26px;top:42px;width:6px;height:12px;background:#b02020;border-radius:30%;filter:blur(0.6px);"></div></div>
<div class="a" style="left:993.5px;top:152.5px;width:80px;height:52.5px;background:linear-gradient(180deg,#3e5e80 0%,#7a92a0 12%,#8aa070 22%,#a8b078 45%,#c8c098 62%,#7a9a48 75%,#6a8a38 100%);overflow:hidden"><div class="a" style="left:0px;top:12px;width:40px;height:14px;background:#5a7a48;border-radius:40%;filter:blur(2px);"></div><div class="a" style="left:55px;top:10px;width:25px;height:15px;background:#6a8a58;border-radius:40%;filter:blur(2px);"></div><div class="a" style="left:58px;top:26px;width:22px;height:12px;background:#8aa0b0;border-radius:40%;filter:blur(2px);"></div><div class="a" style="left:43px;top:8px;width:16px;height:22px;background:#2a2a2c;border-radius:40% 40% 20% 20%;filter:blur(0.6px);"></div><div class="a" style="left:46px;top:5px;width:9px;height:8px;background:#c8a090;border-radius:50%;filter:blur(0.6px);"></div><div class="a" style="left:43px;top:27px;width:15px;height:13px;background:#2a5a78;border-radius:20%;filter:blur(0.6px);"></div><div class="a" style="left:46px;top:39px;width:9px;height:14px;background:#1a1a1a;border-radius:10%;filter:blur(0.5px);"></div></div>
<div class="a" style="left:1053px;top:152.5px;width:291px;height:52.5px;background:#8b0000"></div>
<div class="a nw " style="left:1074.70px;top:160.95px;font-size:14.56px;line-height:20px;font-family:'Liberation Sans',sans-serif;color:#fff;font-weight:bold">Photograph your local culture, help</div>
<div class="a nw " style="left:1074.70px;top:176.45px;font-size:14.56px;line-height:20px;font-family:'Liberation Sans',sans-serif;color:#fff;font-weight:bold">Wikipedia and win!</div>
<svg class="a" style="left:1322px;top:155px;" width="20" height="20" viewBox="0 0 20 20"><circle cx="10" cy="10" r="8.6" fill="#e8e0e0"/><circle cx="10" cy="10" r="7.2" fill="#c8b4b4" stroke="#333" stroke-width="1.5"/><path d="M7.2 7.2 L12.8 12.8 M12.8 7.2 L7.2 12.8" stroke="#333" stroke-width="1.6"/></svg>
<div class="a nw " style="left:98.70px;top:270.63px;font-size:12.6px;line-height:20px;font-family:'Liberation Sans',sans-serif;font-weight:bold;color:#202122">Contents</div>
<div class="a" style="left:165px;top:270.5px;width:35px;height:19.5px;background:#eaecf0;border-radius:2px"></div>
<div class="a nw " style="left:172.30px;top:270.62px;font-size:11.2px;line-height:20px;font-family:'Liberation Sans',sans-serif;color:#202122">hide</div>
<div class="a" style="left:98.5px;top:296.5px;width:149.5px;height:1px;background:#eaecf0"></div>
<div class="a nw " style="left:98.70px;top:306.50px;font-size:12.7px;line-height:20px;font-family:'Liberation Sans',sans-serif;font-weight:bold;color:#202122">(Top)</div>
<div class="a nw lk" style="left:98.70px;top:332.68px;font-size:12.75px;line-height:20px;font-family:'Liberation Sans',sans-serif;">Etymology and naming</div>
<div class="a nw lk" style="left:98.70px;top:358.88px;font-size:12.75px;line-height:20px;font-family:'Liberation Sans',sans-serif;">Taxonomy</div>
<div class="a nw lk" style="left:98.70px;top:385.08px;font-size:12.75px;line-height:20px;font-family:'Liberation Sans',sans-serif;">Evolution</div>
<svg class="a" style="left:83px;top:387.7px;" width="10" height="10" viewBox="0 0 10 10"><path d="M2.3 0.8 L7 5 L2.3 9.2" fill="none" stroke="#202122" stroke-width="1.1"/></svg>
<div class="a nw lk" style="left:98.70px;top:411.28px;font-size:12.75px;line-height:20px;font-family:'Liberation Sans',sans-serif;">Characteristics</div>
<svg class="a" style="left:83px;top:413.9px;" width="10" height="10" viewBox="0 0 10 10"><path d="M2.3 0.8 L7 5 L2.3 9.2" fill="none" stroke="#202122" stroke-width="1.1"/></svg>
<div class="a nw lk" style="left:98.70px;top:437.48px;font-size:12.75px;line-height:20px;font-family:'Liberation Sans',sans-serif;">Senses</div>
<svg class="a" style="left:83px;top:440.09999999999997px;" width="10" height="10" viewBox="0 0 10 10"><path d="M2.3 0.8 L7 5 L2.3 9.2" fill="none" stroke="#202122" stroke-width="1.1"/></svg>
<div class="a nw lk" style="left:98.70px;top:463.68px;font-size:12.75px;line-height:20px;font-family:'Liberation Sans',sans-serif;">Behavior</div>
<svg class="a" style="left:83px;top:466.29999999999995px;" width="10" height="10" viewBox="0 0 10 10"><path d="M2.3 0.8 L7 5 L2.3 9.2" fill="none" stroke="#202122" stroke-width="1.1"/></svg>
<div class="a nw lk" style="left:98.70px;top:489.88px;font-size:12.75px;line-height:20px;font-family:'Liberation Sans',sans-serif;">Lifespan and health</div>
<svg class="a" style="left:83px;top:492.49999999999994px;" width="10" height="10" viewBox="0 0 10 10"><path d="M2.3 0.8 L7 5 L2.3 9.2" fill="none" stroke="#202122" stroke-width="1.1"/></svg>
<div class="a nw lk" style="left:98.70px;top:516.08px;font-size:12.75px;line-height:20px;font-family:'Liberation Sans',sans-serif;">Ecology</div>
<svg class="a" style="left:83px;top:518.7px;" width="10" height="10" viewBox="0 0 10 10"><path d="M2.3 0.8 L7 5 L2.3 9.2" fill="none" stroke="#202122" stroke-width="1.1"/></svg>
<div class="a nw lk" style="left:98.70px;top:542.28px;font-size:12.75px;line-height:20px;font-family:'Liberation Sans',sans-serif;">Interaction with humans</div>
<svg class="a" style="left:83px;top:544.9px;" width="10" height="10" viewBox="0 0 10 10"><path d="M2.3 0.8 L7 5 L2.3 9.2" fill="none" stroke="#202122" stroke-width="1.1"/></svg>
<div class="a nw lk" style="left:98.70px;top:568.48px;font-size:12.75px;line-height:20px;font-family:'Liberation Sans',sans-serif;">See also</div>
<div class="a nw lk" style="left:98.70px;top:594.68px;font-size:12.75px;line-height:20px;font-family:'Liberation Sans',sans-serif;">Notes</div>
<div class="a nw lk" style="left:98.70px;top:620.88px;font-size:12.75px;line-height:20px;font-family:'Liberation Sans',sans-serif;">References</div>
<div class="a nw lk" style="left:98.70px;top:647.08px;font-size:12.75px;line-height:20px;font-family:'Liberation Sans',sans-serif;">External links</div>
<div class="a nw " style="left:285.00px;top:235.69px;font-size:27.6px;line-height:20px;font-family:'Liberation Serif',serif;color:#000">Cat</div>
<svg class="a" style="left:1006px;top:236px;" width="24" height="20" viewBox="0 0 24 20"><path d="M2.5 4.2 H13 M7.8 1.8 V4.2 M4.2 4.2 Q6.5 10.5 12.5 13 M11.2 4.2 Q9 10.5 2.5 13" fill="none" stroke="#3366cc" stroke-width="1.25"/><path d="M9.8 17.5 L14.6 6.5 L19.4 17.5 M11.5 13.8 H17.7" fill="none" stroke="#3366cc" stroke-width="1.35"/></svg>
<div class="a nw lk" style="left:1036.00px;top:236.08px;font-size:12.75px;line-height:20px;font-family:'Liberation Sans',sans-serif;font-weight:bold">271 languages</div>
<svg class="a" style="left:1133px;top:241px;" width="12" height="9" viewBox="0 0 12 9"><path d="M1.5 2 L6 6.5 L10.5 2" fill="none" stroke="#3366cc" stroke-width="1.4"/></svg>
<div class="a" style="left:285px;top:263px;width:860px;height:1px;background:#a2a9b1"></div>
<div class="a nw " style="left:285.00px;top:272.13px;font-size:12.6px;line-height:20px;font-family:'Liberation Sans',sans-serif;color:#202122">Article</div>
<div class="a nw lk" style="left:335.00px;top:272.13px;font-size:12.6px;line-height:20px;font-family:'Liberation Sans',sans-serif;">Talk</div>
<div class="a" style="left:285px;top:297px;width:860px;height:1px;background:#c8ccd1"></div>
<div class="a" style="left:285px;top:296px;width:35px;height:2px;background:#202122"></div>
<div class="a nw " style="left:882.00px;top:272.13px;font-size:12.6px;line-height:20px;font-family:'Liberation Sans',sans-serif;color:#202122">Read</div>
<div class="a" style="left:882px;top:296px;width:30px;height:2px;background:#202122"></div>
<div class="a nw lk" style="left:927.00px;top:272.13px;font-size:12.6px;line-height:20px;font-family:'Liberation Sans',sans-serif;">View source</div>
<div class="a nw lk" style="left:1011.20px;top:272.13px;font-size:12.6px;line-height:20px;font-family:'Liberation Sans',sans-serif;">View history</div>
<div class="a nw " style="left:1094.20px;top:272.13px;font-size:12.6px;line-height:20px;font-family:'Liberation Sans',sans-serif;color:#202122">Tools</div>
<svg class="a" style="left:1133px;top:276px;" width="12" height="10" viewBox="0 0 12 10"><path d="M1.5 3 L6 7.5 L10.5 3" fill="none" stroke="#202122" stroke-width="1.4"/></svg>
<svg class="a" style="left:1075px;top:306px;" width="20" height="20" viewBox="0 0 20 20"><circle cx="10" cy="10.3" r="7.9" fill="#fff" stroke="#177a3c" stroke-width="1.8"/><path d="M10 6 V14.6 M5.7 10.3 H14.3" stroke="#177a3c" stroke-width="1.9"/></svg>
<svg class="a" style="left:1100px;top:306px;" width="20" height="22" viewBox="0 0 20 22"><path d="M6 11 V7.5 A4 4 0 0 1 14 7.5 V11" fill="none" stroke="#54595d" stroke-width="2"/><rect x="3.5" y="10.5" width="13" height="9.5" rx="1.2" fill="#54595d"/><circle cx="10" cy="14.5" r="1.8" fill="#fff"/><path d="M6.5 20 Q10 16.5 13.5 20" fill="#fff"/></svg>
<svg class="a" style="left:1124px;top:308px;" width="22" height="17" viewBox="0 0 22 17"><path d="M1.5 5 H4 L7 2 V15 L4 12 H1.5 Z" fill="#a2a9b1"/><path d="M9.5 4.5 Q12 8.5 9.5 12.5 M12.5 2.5 Q16 8.5 12.5 14.5 M15.5 1 Q20 8.5 15.5 16" fill="none" stroke="#a2a9b1" stroke-width="1.3"/><ellipse cx="5" cy="8.5" rx="2.6" ry="6" fill="#777"/></svg>
<div class="a nw " style="left:285.00px;top:305.58px;font-size:12.76px;line-height:20px;font-family:'Liberation Sans',sans-serif;color:#202122">From Wikipedia, the free encyclopedia</div>
<div class="a" style="left:510.6px;top:418px;width:85.7px;height:22.6px;background:#cfcfcf"></div>
<div class="a nw " style="left:308.60px;top:342.14px;font-size:14.6px;line-height:20px;font-family:'Liberation Sans',sans-serif;font-style:italic">This article is about the species commonly kept as a pet. For the cat family, see <span class="lk">Felidae</span>. For other uses, see <span class="lk">Cat (disambiguation)</span></div>
<div class="a nw " style="left:308.60px;top:365.54px;font-size:14.6px;line-height:20px;font-family:'Liberation Sans',sans-serif;font-style:italic">and <span class="lk">Cats (disambiguation)</span>.</div>
<div class="a nw " style="left:285.00px;top:396.25px;font-size:14.56px;line-height:20px;font-family:'Liberation Sans',sans-serif;">The <b>cat</b> (<b><i>Felis catus</i></b>), also referred to as the <b>domestic cat</b>, is a small <span class="lk">domesticated</span></div>
<div class="a nw " style="left:285.00px;top:419.61px;font-size:14.56px;line-height:20px;font-family:'Liberation Sans',sans-serif;">carnivorous mammal. It is the only domesticated <span class="lk">species</span> of the family <span class="lk">Felidae</span>. Advances in</div>
<div class="a nw " style="left:285.00px;top:442.97px;font-size:14.56px;line-height:20px;font-family:'Liberation Sans',sans-serif;"><span class="lk">archaeology</span> and <span class="lk">genetics</span> have shown that the <span class="lk">domestication of the cat</span> occurred in the</div>
<div class="a nw " style="left:285.00px;top:466.33px;font-size:14.56px;line-height:20px;font-family:'Liberation Sans',sans-serif;"><span class="lk">Near East</span> around 7500 BC. It is commonly kept as a pet and <span class="lk">farm cat</span>, but also ranges</div>
<div class="a nw " style="left:285.00px;top:489.69px;font-size:14.56px;line-height:20px;font-family:'Liberation Sans',sans-serif;">freely as a <span class="lk">feral cat</span> avoiding human contact. It is valued by humans for companionship and</div>
<div class="a nw " style="left:285.00px;top:513.05px;font-size:14.56px;line-height:20px;font-family:'Liberation Sans',sans-serif;">its ability to kill <span class="lk">vermin</span>. Its retractable <span class="vl">claws</span> are adapted to killing small prey species such</div>
<div class="a nw " style="left:285.00px;top:536.41px;font-size:14.56px;line-height:20px;font-family:'Liberation Sans',sans-serif;">as <span class="lk">mice</span> and <span class="lk">rats</span>. It has a strong, flexible body, quick <span class="lk">reflexes</span>, and sharp teeth, and its</div>
<div class="a nw " style="left:285.00px;top:559.77px;font-size:14.56px;line-height:20px;font-family:'Liberation Sans',sans-serif;"><span class="lk">night vision</span> and <span class="lk">sense of smell</span> are well developed. It is a social species, but a solitary</div>
<div class="a nw " style="left:285.00px;top:583.13px;font-size:14.56px;line-height:20px;font-family:'Liberation Sans',sans-serif;">hunter and a <span class="lk">crepuscular predator</span>. <span class="lk">Cat communication</span> includes vocalizations—including</div>
<div class="a nw " style="left:285.00px;top:606.49px;font-size:14.56px;line-height:20px;font-family:'Liberation Sans',sans-serif;"><span class="lk">meowing</span>, <span class="lk">purring</span>, trilling, <span class="lk">hissing</span>, <span class="lk">growling</span>, and <span class="lk">grunting</span>—as well as <span class="lk">body language</span>. It can</div>
<div class="a nw " style="left:285.00px;top:629.85px;font-size:14.56px;line-height:20px;font-family:'Liberation Sans',sans-serif;">hear sounds too faint or too high in <span class="lk">frequency</span> for human ears, such as those made by</div>
<div class="a nw " style="left:285.00px;top:653.21px;font-size:14.56px;line-height:20px;font-family:'Liberation Sans',sans-serif;"><span class="lk">small mammals</span>. It secretes and perceives <span class="lk">pheromones</span>.</div>
<div class="a nw " style="left:285.00px;top:691.15px;font-size:14.56px;line-height:20px;font-family:'Liberation Sans',sans-serif;">Female domestic cats can have <span class="lk">kittens</span> from <span class="lk">spring</span> to late <span class="lk">autumn</span> in <span class="lk">temperate zones</span> and</div>
<div class="a nw " style="left:285.00px;top:714.51px;font-size:14.56px;line-height:20px;font-family:'Liberation Sans',sans-serif;">throughout the year in <span class="lk">equatorial regions</span>, with <span class="lk">litter</span> sizes often ranging from two to five</div>
<div class="a nw " style="left:285.00px;top:737.87px;font-size:14.56px;line-height:20px;font-family:'Liberation Sans',sans-serif;">kittens. Domestic cats are bred and shown at events as registered <span class="lk">pedigreed cats</span>, a hobby</div>
<div class="a" style="left:888.5px;top:401.5px;width:257px;height:360px;background:#f8f9fa;border:1px solid #a2a9b1"></div>
<div class="a" style="left:893.5px;top:407.5px;width:245.5px;height:110.5px;background:#ebebd2"></div>
<div class="a nw " style="left:1004.60px;top:409.04px;font-size:14.3px;line-height:20px;font-family:'Liberation Sans',sans-serif;font-weight:bold;color:#202122">Cat</div>
<div class="a nw " style="left:928.40px;top:430.21px;font-size:12.37px;line-height:20px;font-family:'Liberation Sans',sans-serif;font-weight:bold;color:#202122">Temporal range: 0.0095–0 <span class="lk">Ma</span></div>
<div class="a" style="left:900px;top:455.3px;width:216px;height:18.2px;border-top:1px solid #999;border-bottom:1px solid #888"></div>
<div class="a" style="left:900px;top:456.3px;width:50.3px;height:16.2px;background:#fed96a"></div>
<div class="a" style="left:950.3px;top:456.3px;width:15.5px;height:16.2px;background:#7fa056"></div>
<div class="a" style="left:965.8px;top:456.3px;width:14.2px;height:16.2px;background:#009270"></div>
<div class="a" style="left:980px;top:456.3px;width:7.2px;height:16.2px;background:#b3e1b6"></div>
<div class="a" style="left:987.2px;top:456.3px;width:18.6px;height:16.2px;background:#cb8c37"></div>
<div class="a" style="left:1005.8px;top:456.3px;width:18.4px;height:16.2px;background:#67a599"></div>
<div class="a" style="left:1024.2px;top:456.3px;width:14.9px;height:16.2px;background:#f04028"></div>
<div class="a" style="left:1039.1px;top:456.3px;width:14.8px;height:16.2px;background:#812b92"></div>
<div class="a" style="left:1053.9px;top:456.3px;width:18.2px;height:16.2px;background:#34b2c9"></div>
<div class="a" style="left:1072.1px;top:456.3px;width:23.8px;height:16.2px;background:#7fc64e"></div>
<div class="a" style="left:1095.9px;top:456.3px;width:13.9px;height:16.2px;background:#fd9a52"></div>
<div class="a" style="left:1109.8px;top:456.3px;width:5.9px;height:16.2px;background:#ffe619"></div>
<div class="a nw lk" style="left:937.50px;top:456.93px;font-size:12.6px;line-height:20px;font-family:'Liberation Sans',sans-serif;-webkit-text-stroke:0.35px #3366cc">C</div>
<div class="a nw lk" style="left:953.85px;top:456.93px;font-size:12.6px;line-height:20px;font-family:'Liberation Sans',sans-serif;-webkit-text-stroke:0.35px #3366cc">Є</div>
<div class="a nw lk" style="left:968.70px;top:456.93px;font-size:12.6px;line-height:20px;font-family:'Liberation Sans',sans-serif;-webkit-text-stroke:0.35px #3366cc">O</div>
<div class="a nw lk" style="left:979.40px;top:456.93px;font-size:12.6px;line-height:20px;font-family:'Liberation Sans',sans-serif;-webkit-text-stroke:0.35px #3366cc">S</div>
<div class="a nw lk" style="left:992.30px;top:456.93px;font-size:12.6px;line-height:20px;font-family:'Liberation Sans',sans-serif;-webkit-text-stroke:0.35px #3366cc">D</div>
<div class="a nw lk" style="left:1010.80px;top:456.93px;font-size:12.6px;line-height:20px;font-family:'Liberation Sans',sans-serif;-webkit-text-stroke:0.35px #3366cc">C</div>
<div class="a nw lk" style="left:1027.45px;top:456.93px;font-size:12.6px;line-height:20px;font-family:'Liberation Sans',sans-serif;-webkit-text-stroke:0.35px #3366cc">P</div>
<div class="a nw lk" style="left:1042.30px;top:456.93px;font-size:12.6px;line-height:20px;font-family:'Liberation Sans',sans-serif;-webkit-text-stroke:0.35px #3366cc">T</div>
<div class="a nw lk" style="left:1058.80px;top:456.93px;font-size:12.6px;line-height:20px;font-family:'Liberation Sans',sans-serif;-webkit-text-stroke:0.35px #3366cc">J</div>
<div class="a nw lk" style="left:1079.80px;top:456.93px;font-size:12.6px;line-height:20px;font-family:'Liberation Sans',sans-serif;-webkit-text-stroke:0.35px #3366cc">K</div>
<div class="a nw lk" style="left:1096.40px;top:456.93px;font-size:12.6px;line-height:20px;font-family:'Liberation Sans',sans-serif;">P<span style="position:relative;top:2px">g</span></div>
<div class="a nw lk" style="left:1109.30px;top:456.93px;font-size:12.6px;line-height:20px;font-family:'Liberation Sans',sans-serif;">N</div>
<div class="a" style="left:1115px;top:452px;width:1.2px;height:4px;background:#333"></div>
<div class="a nw " style="left:905.00px;top:495.21px;font-size:12.37px;line-height:20px;font-family:'Liberation Sans',sans-serif;font-weight:bold;color:#202122"><span class="lk">Holocene</span> to present (9,500 years ago)</div>
<svg class="a" style="left:896.9px;top:522px" width="165" height="100" viewBox="0 0 165 100">
<defs><filter id="bl1"><feGaussianBlur stdDeviation="0.6"/></filter><filter id="bl2"><feGaussianBlur stdDeviation="1.2"/></filter></defs>
<rect width="165" height="100" fill="#e6e6e8"/>
<rect y="0" width="165" height="14" fill="#dedee0"/>
<rect y="14" width="165" height="49" fill="#e9e9eb"/>
<rect y="63" width="165" height="37" fill="#ececee"/>
<rect y="62" width="165" height="3" fill="#d4d4d6" filter="url(#bl1)"/>
<g filter="url(#bl1)">
<path d="M-5 44 Q40 38 100 42 Q118 44 130 50 L160 58 Q163 63 156 66 L120 64 Q90 66 60 64 Q20 66 -5 64 Z" fill="#7e7264"/>
<path d="M20 46 L24 62 M34 44 L38 63 M50 44 L54 64 M68 45 L70 64 M82 46 L84 64 M96 47 L98 64 M112 56 L116 64 M126 58 L128 65 M140 60 L142 65" stroke="#3a332c" stroke-width="2.2"/>
<path d="M104 30 Q106 20 118 21 Q130 20 132 30 Q134 46 118 53 Q104 48 104 30 Z" fill="#8a7c6a"/>
<path d="M104 30 L106 14 L114 22 Z M132 30 L130 14 L122 22 Z" fill="#907e68"/>
<ellipse cx="118" cy="40" rx="6" ry="5" fill="#b8a890"/>
<path d="M12 64 Q14 76 26 86 Q32 88 32 82 Q26 74 24 64 Z" fill="#3a3028"/>
<ellipse cx="153" cy="62" rx="7" ry="5" fill="#3a322a"/>
<ellipse cx="56" cy="62" rx="6" ry="4" fill="#2e2822"/>
</g>
</svg>
<svg class="a" style="left:1065.2px;top:522px" width="71" height="100" viewBox="0 0 71 100">
<rect width="71" height="100" fill="#e6e6e6"/>
<rect y="84" width="71" height="16" fill="#d8d3ca"/>
<g filter="url(#bl1)">
<path d="M41 30 Q28 46 17 64 Q8 80 11 91 Q30 95 50 93 L60 92 Q59 72 58 54 Q57 40 53 33 Z" fill="#a67646"/>
<path d="M14 80 Q20 62 36 64 Q46 70 44 90 L14 92 Z" fill="#966a3c"/>
<path d="M38 22 Q39 12 47 11 Q57 12 58 22 Q58 33 52 37 Q43 38 40 32 Z" fill="#ad7c4a"/>
<path d="M40 17 L41 5 L47 13 Z M53 12 L58 4 L58 18 Z" fill="#9a6a3a"/>
<path d="M49 26 Q54 24 59 26 Q57 33 52 35 Z" fill="#c8a07a"/>
<path d="M50 58 L49 92 M56 56 L57 92" stroke="#8a5e34" stroke-width="2.6"/>
<path d="M12 90 Q32 96 60 90" stroke="#3a2e24" stroke-width="3.5" fill="none"/>
</g>
</svg>
<svg class="a" style="left:896.9px;top:624.2px" width="102" height="126" viewBox="0 0 102 126">
<defs><linearGradient id="lv" x1="0" y1="0" x2="0" y2="1"><stop offset="0" stop-color="#6e6c66"/><stop offset="0.25" stop-color="#5a5650"/><stop offset="0.5" stop-color="#4a443e"/><stop offset="1" stop-color="#3e3934"/></linearGradient></defs>
<rect width="102" height="126" fill="url(#lv)"/>
<ellipse cx="30" cy="22" rx="28" ry="8" fill="#5e7a48" opacity="0.7" filter="url(#bl2)"/>
<ellipse cx="88" cy="10" rx="14" ry="4" fill="#6a8450" opacity="0.6" filter="url(#bl2)"/>
<g><ellipse cx="33.0" cy="42.8" rx="3.1" ry="0.9" fill="#6a625a" transform="rotate(96 33.0 42.8)"/><ellipse cx="59.4" cy="117.2" rx="2.0" ry="0.9" fill="#3a3430" transform="rotate(75 59.4 117.2)"/><ellipse cx="9.3" cy="69.6" rx="3.6" ry="1.0" fill="#251f1a" transform="rotate(40 9.3 69.6)"/><ellipse cx="59.5" cy="34.1" rx="3.0" ry="0.9" fill="#55504a" transform="rotate(40 59.5 34.1)"/><ellipse cx="87.6" cy="56.4" rx="1.9" ry="1.0" fill="#251f1a" transform="rotate(56 87.6 56.4)"/><ellipse cx="18.4" cy="85.0" rx="3.1" ry="1.3" fill="#2e2a26" transform="rotate(99 18.4 85.0)"/><ellipse cx="57.6" cy="88.7" rx="2.7" ry="1.5" fill="#8a8078" transform="rotate(140 57.6 88.7)"/><ellipse cx="59.7" cy="72.4" rx="2.2" ry="1.9" fill="#3a3430" transform="rotate(126 59.7 72.4)"/><ellipse cx="8.3" cy="57.4" rx="2.7" ry="1.3" fill="#55504a" transform="rotate(81 8.3 57.4)"/><ellipse cx="100.0" cy="39.6" rx="2.5" ry="1.9" fill="#8a8078" transform="rotate(27 100.0 39.6)"/><ellipse cx="43.0" cy="122.3" rx="1.7" ry="1.6" fill="#6a625a" transform="rotate(142 43.0 122.3)"/><ellipse cx="34.7" cy="62.3" rx="2.7" ry="1.9" fill="#2e2a26" transform="rotate(12 34.7 62.3)"/><ellipse cx="96.4" cy="74.5" rx="3.2" ry="0.9" fill="#251f1a" transform="rotate(126 96.4 74.5)"/><ellipse cx="59.0" cy="94.8" rx="2.6" ry="1.8" fill="#6a625a" transform="rotate(160 59.0 94.8)"/><ellipse cx="2.3" cy="73.2" rx="1.9" ry="1.0" fill="#6a625a" transform="rotate(11 2.3 73.2)"/><ellipse cx="13.2" cy="52.3" rx="2.5" ry="2.0" fill="#8a8078" transform="rotate(15 13.2 52.3)"/><ellipse cx="41.0" cy="55.2" rx="1.8" ry="1.4" fill="#251f1a" transform="rotate(99 41.0 55.2)"/><ellipse cx="42.4" cy="63.2" rx="3.7" ry="2.1" fill="#3a3430" transform="rotate(27 42.4 63.2)"/><ellipse cx="15.4" cy="92.5" rx="1.5" ry="2.0" fill="#6a625a" transform="rotate(33 15.4 92.5)"/><ellipse cx="0.4" cy="69.1" rx="2.4" ry="1.6" fill="#251f1a" transform="rotate(172 0.4 69.1)"/><ellipse cx="87.6" cy="121.1" rx="3.1" ry="1.8" fill="#251f1a" transform="rotate(82 87.6 121.1)"/><ellipse cx="81.4" cy="66.5" rx="2.5" ry="0.9" fill="#2e2a26" transform="rotate(114 81.4 66.5)"/><ellipse cx="19.4" cy="124.5" rx="2.6" ry="1.0" fill="#2e2a26" transform="rotate(108 19.4 124.5)"/><ellipse cx="0.0" cy="42.8" rx="1.8" ry="1.3" fill="#3a3430" transform="rotate(5 0.0 42.8)"/><ellipse cx="62.6" cy="42.6" rx="2.1" ry="1.3" fill="#2e2a26" transform="rotate(66 62.6 42.6)"/><ellipse cx="11.8" cy="75.8" rx="3.9" ry="1.5" fill="#3a3430" transform="rotate(56 11.8 75.8)"/><ellipse cx="10.4" cy="61.6" rx="2.2" ry="2.0" fill="#2e2a26" transform="rotate(29 10.4 61.6)"/><ellipse cx="20.9" cy="121.3" rx="2.4" ry="1.8" fill="#55504a" transform="rotate(165 20.9 121.3)"/><ellipse cx="30.4" cy="91.0" rx="1.7" ry="2.0" fill="#3a3430" transform="rotate(93 30.4 91.0)"/><ellipse cx="36.3" cy="49.8" rx="2.9" ry="1.5" fill="#55504a" transform="rotate(115 36.3 49.8)"/><ellipse cx="82.8" cy="124.5" rx="3.6" ry="1.9" fill="#251f1a" transform="rotate(147 82.8 124.5)"/><ellipse cx="81.9" cy="47.6" rx="2.7" ry="1.8" fill="#6a625a" transform="rotate(178 81.9 47.6)"/><ellipse cx="48.2" cy="47.0" rx="3.0" ry="1.3" fill="#251f1a" transform="rotate(146 48.2 47.0)"/><ellipse cx="100.8" cy="121.6" rx="2.4" ry="1.1" fill="#3a3430" transform="rotate(41 100.8 121.6)"/><ellipse cx="34.4" cy="75.3" rx="4.0" ry="1.7" fill="#251f1a" transform="rotate(0 34.4 75.3)"/><ellipse cx="35.1" cy="91.0" rx="3.6" ry="1.0" fill="#251f1a" transform="rotate(70 35.1 91.0)"/><ellipse cx="76.5" cy="74.8" rx="1.9" ry="1.9" fill="#251f1a" transform="rotate(60 76.5 74.8)"/><ellipse cx="40.4" cy="67.3" rx="3.9" ry="1.8" fill="#3a3430" transform="rotate(31 40.4 67.3)"/><ellipse cx="2.8" cy="85.9" rx="2.7" ry="1.7" fill="#55504a" transform="rotate(110 2.8 85.9)"/><ellipse cx="100.0" cy="92.4" rx="2.4" ry="1.6" fill="#2e2a26" transform="rotate(24 100.0 92.4)"/><ellipse cx="81.5" cy="99.2" rx="1.8" ry="1.8" fill="#3a3430" transform="rotate(25 81.5 99.2)"/><ellipse cx="84.3" cy="48.7" rx="2.1" ry="1.2" fill="#55504a" transform="rotate(43 84.3 48.7)"/><ellipse cx="33.3" cy="81.3" rx="3.6" ry="0.9" fill="#8a8078" transform="rotate(133 33.3 81.3)"/><ellipse cx="67.6" cy="107.9" rx="2.8" ry="2.0" fill="#3a3430" transform="rotate(158 67.6 107.9)"/><ellipse cx="54.2" cy="79.3" rx="1.5" ry="1.4" fill="#2e2a26" transform="rotate(33 54.2 79.3)"/><ellipse cx="79.2" cy="42.7" rx="1.9" ry="1.7" fill="#2e2a26" transform="rotate(22 79.2 42.7)"/><ellipse cx="33.3" cy="78.8" rx="2.9" ry="1.9" fill="#55504a" transform="rotate(19 33.3 78.8)"/><ellipse cx="5.8" cy="46.7" rx="1.6" ry="0.9" fill="#2e2a26" transform="rotate(81 5.8 46.7)"/><ellipse cx="77.5" cy="117.4" rx="2.6" ry="1.7" fill="#55504a" transform="rotate(91 77.5 117.4)"/><ellipse cx="20.3" cy="55.2" rx="2.8" ry="1.9" fill="#3a3430" transform="rotate(91 20.3 55.2)"/><ellipse cx="71.3" cy="113.9" rx="3.9" ry="1.2" fill="#3a3430" transform="rotate(101 71.3 113.9)"/><ellipse cx="85.7" cy="41.4" rx="1.8" ry="1.4" fill="#3a3430" transform="rotate(13 85.7 41.4)"/><ellipse cx="43.7" cy="48.8" rx="2.3" ry="1.0" fill="#251f1a" transform="rotate(140 43.7 48.8)"/><ellipse cx="65.6" cy="63.9" rx="2.1" ry="1.0" fill="#251f1a" transform="rotate(84 65.6 63.9)"/><ellipse cx="97.2" cy="67.0" rx="2.7" ry="2.2" fill="#3a3430" transform="rotate(150 97.2 67.0)"/><ellipse cx="72.0" cy="125.4" rx="2.5" ry="1.4" fill="#2e2a26" transform="rotate(64 72.0 125.4)"/><ellipse cx="73.7" cy="29.9" rx="2.9" ry="1.4" fill="#6a625a" transform="rotate(3 73.7 29.9)"/><ellipse cx="52.8" cy="57.0" rx="3.9" ry="1.0" fill="#3a3430" transform="rotate(165 52.8 57.0)"/><ellipse cx="99.1" cy="38.3" rx="2.2" ry="0.9" fill="#6a625a" transform="rotate(140 99.1 38.3)"/><ellipse cx="77.1" cy="108.3" rx="3.6" ry="1.7" fill="#8a8078" transform="rotate(170 77.1 108.3)"/><ellipse cx="15.2" cy="118.1" rx="2.9" ry="1.8" fill="#2e2a26" transform="rotate(16 15.2 118.1)"/><ellipse cx="81.6" cy="46.0" rx="3.7" ry="1.2" fill="#2e2a26" transform="rotate(3 81.6 46.0)"/><ellipse cx="81.8" cy="36.2" rx="3.6" ry="0.9" fill="#8a8078" transform="rotate(155 81.8 36.2)"/><ellipse cx="1.2" cy="125.4" rx="2.5" ry="2.1" fill="#2e2a26" transform="rotate(112 1.2 125.4)"/><ellipse cx="53.7" cy="51.4" rx="1.8" ry="1.0" fill="#3a3430" transform="rotate(9 53.7 51.4)"/><ellipse cx="95.1" cy="89.6" rx="2.8" ry="1.1" fill="#251f1a" transform="rotate(80 95.1 89.6)"/><ellipse cx="18.1" cy="62.0" rx="1.5" ry="1.2" fill="#251f1a" transform="rotate(3 18.1 62.0)"/><ellipse cx="51.6" cy="123.8" rx="2.8" ry="1.1" fill="#251f1a" transform="rotate(80 51.6 123.8)"/><ellipse cx="83.5" cy="70.4" rx="2.7" ry="2.0" fill="#55504a" transform="rotate(71 83.5 70.4)"/><ellipse cx="31.4" cy="49.1" rx="2.1" ry="1.1" fill="#251f1a" transform="rotate(159 31.4 49.1)"/><ellipse cx="64.9" cy="67.7" rx="2.4" ry="0.9" fill="#2e2a26" transform="rotate(23 64.9 67.7)"/><ellipse cx="63.8" cy="114.2" rx="2.6" ry="0.9" fill="#8a8078" transform="rotate(120 63.8 114.2)"/><ellipse cx="88.8" cy="93.7" rx="2.2" ry="1.1" fill="#8a8078" transform="rotate(53 88.8 93.7)"/><ellipse cx="18.9" cy="54.4" rx="1.5" ry="1.3" fill="#55504a" transform="rotate(59 18.9 54.4)"/><ellipse cx="33.0" cy="31.4" rx="3.7" ry="1.1" fill="#6a625a" transform="rotate(33 33.0 31.4)"/><ellipse cx="38.9" cy="74.5" rx="2.8" ry="1.1" fill="#2e2a26" transform="rotate(91 38.9 74.5)"/><ellipse cx="9.3" cy="108.1" rx="1.9" ry="1.6" fill="#6a625a" transform="rotate(71 9.3 108.1)"/><ellipse cx="31.0" cy="50.8" rx="3.0" ry="1.5" fill="#251f1a" transform="rotate(135 31.0 50.8)"/><ellipse cx="91.1" cy="104.8" rx="3.0" ry="1.9" fill="#8a8078" transform="rotate(130 91.1 104.8)"/><ellipse cx="15.2" cy="99.0" rx="3.1" ry="0.9" fill="#55504a" transform="rotate(150 15.2 99.0)"/><ellipse cx="64.0" cy="99.9" rx="3.5" ry="1.0" fill="#55504a" transform="rotate(94 64.0 99.9)"/><ellipse cx="58.0" cy="107.7" rx="1.5" ry="1.8" fill="#251f1a" transform="rotate(144 58.0 107.7)"/><ellipse cx="69.7" cy="95.9" rx="2.1" ry="0.8" fill="#6a625a" transform="rotate(24 69.7 95.9)"/><ellipse cx="97.9" cy="64.9" rx="2.6" ry="0.9" fill="#55504a" transform="rotate(3 97.9 64.9)"/><ellipse cx="69.4" cy="76.0" rx="1.5" ry="1.9" fill="#55504a" transform="rotate(135 69.4 76.0)"/><ellipse cx="91.6" cy="37.0" rx="2.8" ry="1.8" fill="#2e2a26" transform="rotate(85 91.6 37.0)"/><ellipse cx="86.3" cy="51.0" rx="3.4" ry="1.1" fill="#8a8078" transform="rotate(117 86.3 51.0)"/><ellipse cx="50.4" cy="65.5" rx="2.7" ry="1.8" fill="#55504a" transform="rotate(138 50.4 65.5)"/><ellipse cx="64.5" cy="47.4" rx="3.0" ry="1.3" fill="#251f1a" transform="rotate(117 64.5 47.4)"/><ellipse cx="31.1" cy="83.6" rx="1.5" ry="0.9" fill="#251f1a" transform="rotate(48 31.1 83.6)"/><ellipse cx="10.2" cy="49.3" rx="2.7" ry="1.8" fill="#8a8078" transform="rotate(51 10.2 49.3)"/><ellipse cx="47.6" cy="39.6" rx="3.7" ry="1.1" fill="#8a8078" transform="rotate(176 47.6 39.6)"/><ellipse cx="1.8" cy="73.0" rx="3.5" ry="2.2" fill="#6a625a" transform="rotate(81 1.8 73.0)"/><ellipse cx="39.5" cy="117.8" rx="3.8" ry="0.9" fill="#251f1a" transform="rotate(16 39.5 117.8)"/><ellipse cx="53.5" cy="121.4" rx="1.8" ry="1.9" fill="#2e2a26" transform="rotate(92 53.5 121.4)"/><ellipse cx="71.7" cy="50.7" rx="3.7" ry="1.5" fill="#2e2a26" transform="rotate(4 71.7 50.7)"/><ellipse cx="96.9" cy="94.8" rx="2.5" ry="1.8" fill="#8a8078" transform="rotate(75 96.9 94.8)"/><ellipse cx="32.2" cy="110.3" rx="1.5" ry="1.9" fill="#2e2a26" transform="rotate(151 32.2 110.3)"/><ellipse cx="95.9" cy="47.2" rx="1.5" ry="1.8" fill="#2e2a26" transform="rotate(46 95.9 47.2)"/><ellipse cx="40.1" cy="125.9" rx="3.0" ry="1.3" fill="#6a625a" transform="rotate(77 40.1 125.9)"/><ellipse cx="87.1" cy="55.5" rx="1.6" ry="1.7" fill="#3a3430" transform="rotate(114 87.1 55.5)"/><ellipse cx="25.4" cy="54.0" rx="2.8" ry="1.1" fill="#8a8078" transform="rotate(67 25.4 54.0)"/><ellipse cx="90.2" cy="107.6" rx="3.1" ry="2.1" fill="#55504a" transform="rotate(169 90.2 107.6)"/><ellipse cx="20.8" cy="35.9" rx="3.8" ry="1.4" fill="#3a3430" transform="rotate(111 20.8 35.9)"/><ellipse cx="65.7" cy="56.0" rx="1.6" ry="2.1" fill="#8a8078" transform="rotate(23 65.7 56.0)"/><ellipse cx="42.3" cy="55.6" rx="2.1" ry="1.8" fill="#8a8078" transform="rotate(118 42.3 55.6)"/><ellipse cx="66.9" cy="57.5" rx="2.9" ry="1.4" fill="#3a3430" transform="rotate(30 66.9 57.5)"/><ellipse cx="7.7" cy="77.1" rx="3.5" ry="1.6" fill="#6a625a" transform="rotate(82 7.7 77.1)"/><ellipse cx="101.6" cy="72.1" rx="1.8" ry="1.1" fill="#6a625a" transform="rotate(16 101.6 72.1)"/><ellipse cx="56.7" cy="59.3" rx="2.4" ry="1.9" fill="#2e2a26" transform="rotate(36 56.7 59.3)"/><ellipse cx="76.5" cy="68.5" rx="2.5" ry="1.5" fill="#6a625a" transform="rotate(68 76.5 68.5)"/><ellipse cx="76.7" cy="76.8" rx="2.9" ry="1.3" fill="#55504a" transform="rotate(124 76.7 76.8)"/><ellipse cx="64.2" cy="112.6" rx="2.0" ry="1.2" fill="#8a8078" transform="rotate(45 64.2 112.6)"/><ellipse cx="65.9" cy="70.3" rx="2.3" ry="1.9" fill="#3a3430" transform="rotate(174 65.9 70.3)"/><ellipse cx="3.3" cy="97.5" rx="3.7" ry="1.5" fill="#2e2a26" transform="rotate(106 3.3 97.5)"/><ellipse cx="7.5" cy="119.2" rx="3.8" ry="1.5" fill="#8a8078" transform="rotate(84 7.5 119.2)"/><ellipse cx="25.3" cy="38.7" rx="1.9" ry="1.5" fill="#251f1a" transform="rotate(123 25.3 38.7)"/><ellipse cx="71.5" cy="111.0" rx="3.7" ry="0.9" fill="#2e2a26" transform="rotate(140 71.5 111.0)"/><ellipse cx="79.8" cy="50.8" rx="3.8" ry="1.7" fill="#3a3430" transform="rotate(55 79.8 50.8)"/><ellipse cx="63.9" cy="79.8" rx="2.6" ry="1.9" fill="#6a625a" transform="rotate(18 63.9 79.8)"/><ellipse cx="53.5" cy="85.1" rx="2.5" ry="1.1" fill="#2e2a26" transform="rotate(108 53.5 85.1)"/><ellipse cx="54.8" cy="125.6" rx="2.2" ry="1.2" fill="#3a3430" transform="rotate(151 54.8 125.6)"/><ellipse cx="48.5" cy="51.0" rx="2.1" ry="2.1" fill="#6a625a" transform="rotate(127 48.5 51.0)"/><ellipse cx="5.6" cy="47.0" rx="3.7" ry="1.7" fill="#3a3430" transform="rotate(15 5.6 47.0)"/><ellipse cx="68.1" cy="118.7" rx="2.1" ry="0.8" fill="#8a8078" transform="rotate(61 68.1 118.7)"/><ellipse cx="37.0" cy="66.8" rx="1.5" ry="1.2" fill="#2e2a26" transform="rotate(152 37.0 66.8)"/><ellipse cx="20.9" cy="123.0" rx="2.3" ry="1.9" fill="#3a3430" transform="rotate(42 20.9 123.0)"/><ellipse cx="27.0" cy="115.2" rx="1.8" ry="1.7" fill="#3a3430" transform="rotate(110 27.0 115.2)"/><ellipse cx="49.5" cy="117.2" rx="1.6" ry="1.6" fill="#2e2a26" transform="rotate(166 49.5 117.2)"/><ellipse cx="21.7" cy="123.5" rx="1.9" ry="0.9" fill="#8a8078" transform="rotate(11 21.7 123.5)"/><ellipse cx="45.9" cy="97.8" rx="2.3" ry="1.0" fill="#3a3430" transform="rotate(14 45.9 97.8)"/><ellipse cx="33.6" cy="46.2" rx="3.8" ry="1.8" fill="#251f1a" transform="rotate(6 33.6 46.2)"/><ellipse cx="74.0" cy="110.2" rx="4.0" ry="1.4" fill="#2e2a26" transform="rotate(20 74.0 110.2)"/><ellipse cx="28.5" cy="62.4" rx="3.9" ry="1.0" fill="#3a3430" transform="rotate(174 28.5 62.4)"/><ellipse cx="38.8" cy="103.3" rx="2.3" ry="1.9" fill="#251f1a" transform="rotate(16 38.8 103.3)"/><ellipse cx="48.3" cy="64.5" rx="3.8" ry="1.1" fill="#8a8078" transform="rotate(66 48.3 64.5)"/><ellipse cx="3.1" cy="68.3" rx="3.5" ry="1.9" fill="#2e2a26" transform="rotate(7 3.1 68.3)"/><ellipse cx="47.3" cy="106.7" rx="1.7" ry="1.1" fill="#55504a" transform="rotate(11 47.3 106.7)"/><ellipse cx="34.6" cy="54.7" rx="3.9" ry="1.7" fill="#251f1a" transform="rotate(47 34.6 54.7)"/><ellipse cx="70.3" cy="118.6" rx="2.2" ry="1.8" fill="#251f1a" transform="rotate(107 70.3 118.6)"/><ellipse cx="96.5" cy="34.4" rx="3.6" ry="1.0" fill="#8a8078" transform="rotate(129 96.5 34.4)"/><ellipse cx="97.3" cy="65.9" rx="2.1" ry="1.4" fill="#8a8078" transform="rotate(89 97.3 65.9)"/><ellipse cx="18.7" cy="106.7" rx="3.3" ry="2.0" fill="#55504a" transform="rotate(139 18.7 106.7)"/><ellipse cx="24.1" cy="112.4" rx="2.7" ry="1.9" fill="#55504a" transform="rotate(107 24.1 112.4)"/><ellipse cx="20.1" cy="101.8" rx="2.1" ry="0.9" fill="#55504a" transform="rotate(6 20.1 101.8)"/><ellipse cx="55.6" cy="43.7" rx="2.6" ry="0.9" fill="#55504a" transform="rotate(13 55.6 43.7)"/><ellipse cx="8.6" cy="37.4" rx="2.7" ry="1.8" fill="#3a3430" transform="rotate(80 8.6 37.4)"/><ellipse cx="13.6" cy="73.2" rx="3.7" ry="1.1" fill="#251f1a" transform="rotate(97 13.6 73.2)"/><ellipse cx="77.5" cy="104.4" rx="2.2" ry="1.2" fill="#6a625a" transform="rotate(48 77.5 104.4)"/><ellipse cx="75.3" cy="47.5" rx="2.1" ry="1.1" fill="#55504a" transform="rotate(28 75.3 47.5)"/><ellipse cx="19.2" cy="34.4" rx="2.1" ry="1.1" fill="#251f1a" transform="rotate(95 19.2 34.4)"/><ellipse cx="82.5" cy="92.0" rx="4.0" ry="0.9" fill="#3a3430" transform="rotate(85 82.5 92.0)"/><ellipse cx="85.7" cy="117.6" rx="1.6" ry="1.2" fill="#3a3430" transform="rotate(21 85.7 117.6)"/><ellipse cx="61.3" cy="109.1" rx="2.0" ry="0.9" fill="#3a3430" transform="rotate(92 61.3 109.1)"/><ellipse cx="45.8" cy="53.5" rx="3.4" ry="2.1" fill="#55504a" transform="rotate(19 45.8 53.5)"/><ellipse cx="72.4" cy="62.3" rx="1.6" ry="1.3" fill="#6a625a" transform="rotate(8 72.4 62.3)"/><ellipse cx="3.9" cy="99.8" rx="3.8" ry="1.9" fill="#8a8078" transform="rotate(147 3.9 99.8)"/><ellipse cx="69.2" cy="46.1" rx="2.3" ry="1.1" fill="#55504a" transform="rotate(143 69.2 46.1)"/><ellipse cx="49.3" cy="68.0" rx="3.5" ry="1.7" fill="#55504a" transform="rotate(28 49.3 68.0)"/><ellipse cx="9.3" cy="44.0" rx="3.2" ry="1.4" fill="#6a625a" transform="rotate(51 9.3 44.0)"/><ellipse cx="42.6" cy="33.0" rx="3.4" ry="2.0" fill="#2e2a26" transform="rotate(75 42.6 33.0)"/><ellipse cx="88.2" cy="125.7" rx="2.4" ry="1.1" fill="#3a3430" transform="rotate(131 88.2 125.7)"/><ellipse cx="96.1" cy="70.5" rx="1.9" ry="1.0" fill="#55504a" transform="rotate(16 96.1 70.5)"/><ellipse cx="90.0" cy="73.2" rx="1.9" ry="0.8" fill="#251f1a" transform="rotate(99 90.0 73.2)"/><ellipse cx="82.3" cy="66.9" rx="2.9" ry="2.1" fill="#3a3430" transform="rotate(133 82.3 66.9)"/><ellipse cx="14.9" cy="55.8" rx="2.8" ry="2.1" fill="#8a8078" transform="rotate(20 14.9 55.8)"/><ellipse cx="76.9" cy="105.6" rx="3.5" ry="1.2" fill="#2e2a26" transform="rotate(151 76.9 105.6)"/><ellipse cx="99.5" cy="75.3" rx="1.6" ry="2.1" fill="#251f1a" transform="rotate(70 99.5 75.3)"/><ellipse cx="63.3" cy="108.8" rx="1.9" ry="1.9" fill="#8a8078" transform="rotate(40 63.3 108.8)"/><ellipse cx="62.7" cy="47.2" rx="2.7" ry="1.6" fill="#55504a" transform="rotate(8 62.7 47.2)"/><ellipse cx="16.0" cy="63.2" rx="1.9" ry="2.2" fill="#3a3430" transform="rotate(147 16.0 63.2)"/><ellipse cx="4.2" cy="83.1" rx="3.4" ry="0.9" fill="#2e2a26" transform="rotate(151 4.2 83.1)"/><ellipse cx="39.8" cy="72.7" rx="3.6" ry="1.9" fill="#6a625a" transform="rotate(117 39.8 72.7)"/><ellipse cx="59.4" cy="69.7" rx="3.1" ry="1.4" fill="#2e2a26" transform="rotate(79 59.4 69.7)"/><ellipse cx="0.4" cy="124.6" rx="2.7" ry="1.4" fill="#8a8078" transform="rotate(111 0.4 124.6)"/><ellipse cx="85.3" cy="107.4" rx="2.5" ry="0.9" fill="#6a625a" transform="rotate(65 85.3 107.4)"/><ellipse cx="9.4" cy="71.3" rx="2.8" ry="0.9" fill="#2e2a26" transform="rotate(115 9.4 71.3)"/><ellipse cx="94.1" cy="58.7" rx="3.3" ry="0.9" fill="#8a8078" transform="rotate(135 94.1 58.7)"/><ellipse cx="66.6" cy="104.9" rx="1.6" ry="0.9" fill="#251f1a" transform="rotate(111 66.6 104.9)"/><ellipse cx="83.1" cy="47.0" rx="4.0" ry="1.5" fill="#3a3430" transform="rotate(172 83.1 47.0)"/><ellipse cx="70.0" cy="98.7" rx="2.1" ry="2.0" fill="#6a625a" transform="rotate(110 70.0 98.7)"/><ellipse cx="16.2" cy="115.9" rx="2.2" ry="1.9" fill="#55504a" transform="rotate(26 16.2 115.9)"/><ellipse cx="98.4" cy="75.1" rx="3.0" ry="1.7" fill="#6a625a" transform="rotate(43 98.4 75.1)"/><ellipse cx="3.8" cy="45.8" rx="1.9" ry="2.1" fill="#8a8078" transform="rotate(122 3.8 45.8)"/><ellipse cx="17.2" cy="104.9" rx="1.8" ry="1.5" fill="#6a625a" transform="rotate(115 17.2 104.9)"/><ellipse cx="98.5" cy="72.4" rx="2.8" ry="1.8" fill="#6a625a" transform="rotate(161 98.5 72.4)"/><ellipse cx="101.3" cy="89.7" rx="2.5" ry="1.9" fill="#6a625a" transform="rotate(48 101.3 89.7)"/><ellipse cx="58.9" cy="63.3" rx="3.4" ry="1.4" fill="#251f1a" transform="rotate(32 58.9 63.3)"/><ellipse cx="97.7" cy="57.0" rx="2.8" ry="1.2" fill="#55504a" transform="rotate(174 97.7 57.0)"/><ellipse cx="94.7" cy="115.8" rx="3.3" ry="1.8" fill="#6a625a" transform="rotate(40 94.7 115.8)"/><ellipse cx="62.8" cy="70.4" rx="2.8" ry="2.1" fill="#3a3430" transform="rotate(24 62.8 70.4)"/><ellipse cx="62.5" cy="32.5" rx="1.6" ry="1.6" fill="#55504a" transform="rotate(55 62.5 32.5)"/><ellipse cx="36.4" cy="50.0" rx="3.0" ry="1.6" fill="#55504a" transform="rotate(37 36.4 50.0)"/><ellipse cx="84.5" cy="43.5" rx="1.5" ry="1.9" fill="#8a8078" transform="rotate(127 84.5 43.5)"/><ellipse cx="9.8" cy="90.5" rx="3.7" ry="1.9" fill="#6a625a" transform="rotate(72 9.8 90.5)"/><ellipse cx="98.6" cy="33.5" rx="3.6" ry="2.0" fill="#55504a" transform="rotate(107 98.6 33.5)"/><ellipse cx="45.3" cy="119.8" rx="3.3" ry="1.1" fill="#2e2a26" transform="rotate(163 45.3 119.8)"/><ellipse cx="6.3" cy="30.5" rx="2.0" ry="1.0" fill="#2e2a26" transform="rotate(164 6.3 30.5)"/><ellipse cx="1.3" cy="82.0" rx="3.9" ry="1.0" fill="#55504a" transform="rotate(36 1.3 82.0)"/><ellipse cx="65.6" cy="91.5" rx="2.5" ry="1.7" fill="#2e2a26" transform="rotate(92 65.6 91.5)"/><ellipse cx="30.6" cy="32.8" rx="3.7" ry="1.9" fill="#2e2a26" transform="rotate(129 30.6 32.8)"/><ellipse cx="38.3" cy="70.8" rx="3.8" ry="0.9" fill="#3a3430" transform="rotate(118 38.3 70.8)"/><ellipse cx="23.0" cy="38.3" rx="2.1" ry="0.9" fill="#251f1a" transform="rotate(60 23.0 38.3)"/><ellipse cx="94.4" cy="120.4" rx="2.2" ry="0.9" fill="#251f1a" transform="rotate(114 94.4 120.4)"/><ellipse cx="44.5" cy="105.3" rx="2.8" ry="1.2" fill="#3a3430" transform="rotate(116 44.5 105.3)"/><ellipse cx="8.7" cy="77.7" rx="1.9" ry="2.1" fill="#3a3430" transform="rotate(152 8.7 77.7)"/><ellipse cx="96.4" cy="101.1" rx="2.3" ry="2.0" fill="#3a3430" transform="rotate(59 96.4 101.1)"/><ellipse cx="38.7" cy="111.5" rx="3.8" ry="2.2" fill="#55504a" transform="rotate(151 38.7 111.5)"/><ellipse cx="47.9" cy="110.3" rx="3.2" ry="2.0" fill="#251f1a" transform="rotate(79 47.9 110.3)"/><ellipse cx="23.9" cy="114.7" rx="3.5" ry="1.3" fill="#55504a" transform="rotate(105 23.9 114.7)"/><ellipse cx="92.9" cy="42.2" rx="1.6" ry="0.9" fill="#6a625a" transform="rotate(167 92.9 42.2)"/><ellipse cx="99.7" cy="96.7" rx="1.6" ry="1.0" fill="#2e2a26" transform="rotate(116 99.7 96.7)"/><ellipse cx="71.1" cy="100.2" rx="1.7" ry="1.6" fill="#55504a" transform="rotate(65 71.1 100.2)"/><ellipse cx="90.9" cy="34.5" rx="3.7" ry="2.1" fill="#2e2a26" transform="rotate(170 90.9 34.5)"/><ellipse cx="25.2" cy="47.9" rx="1.6" ry="2.1" fill="#251f1a" transform="rotate(164 25.2 47.9)"/><ellipse cx="8.9" cy="101.6" rx="3.1" ry="1.5" fill="#251f1a" transform="rotate(24 8.9 101.6)"/><ellipse cx="20.9" cy="59.3" rx="2.6" ry="0.8" fill="#6a625a" transform="rotate(46 20.9 59.3)"/><ellipse cx="4.9" cy="102.5" rx="3.8" ry="1.9" fill="#8a8078" transform="rotate(108 4.9 102.5)"/><ellipse cx="86.8" cy="88.6" rx="1.6" ry="1.4" fill="#2e2a26" transform="rotate(79 86.8 88.6)"/><ellipse cx="35.4" cy="97.1" rx="2.8" ry="1.1" fill="#2e2a26" transform="rotate(155 35.4 97.1)"/><ellipse cx="58.6" cy="56.1" rx="2.6" ry="1.5" fill="#2e2a26" transform="rotate(52 58.6 56.1)"/><ellipse cx="0.4" cy="76.1" rx="2.7" ry="1.9" fill="#8a8078" transform="rotate(33 0.4 76.1)"/><ellipse cx="60.4" cy="121.8" rx="2.8" ry="1.6" fill="#3a3430" transform="rotate(29 60.4 121.8)"/><ellipse cx="95.7" cy="50.7" rx="1.9" ry="2.1" fill="#8a8078" transform="rotate(138 95.7 50.7)"/><ellipse cx="80.4" cy="96.3" rx="3.5" ry="1.7" fill="#8a8078" transform="rotate(64 80.4 96.3)"/><ellipse cx="94.7" cy="115.4" rx="3.4" ry="1.4" fill="#6a625a" transform="rotate(116 94.7 115.4)"/><ellipse cx="21.0" cy="53.8" rx="3.8" ry="1.5" fill="#251f1a" transform="rotate(68 21.0 53.8)"/><ellipse cx="23.8" cy="73.2" rx="2.8" ry="1.9" fill="#251f1a" transform="rotate(136 23.8 73.2)"/><ellipse cx="3.5" cy="85.0" rx="2.8" ry="2.0" fill="#55504a" transform="rotate(81 3.5 85.0)"/><ellipse cx="75.7" cy="44.6" rx="2.6" ry="1.9" fill="#3a3430" transform="rotate(104 75.7 44.6)"/><ellipse cx="34.1" cy="91.0" rx="3.2" ry="1.5" fill="#251f1a" transform="rotate(48 34.1 91.0)"/><ellipse cx="84.3" cy="88.5" rx="3.3" ry="2.2" fill="#55504a" transform="rotate(130 84.3 88.5)"/><ellipse cx="53.3" cy="43.8" rx="2.3" ry="1.1" fill="#251f1a" transform="rotate(176 53.3 43.8)"/><ellipse cx="101.5" cy="44.1" rx="3.1" ry="1.1" fill="#3a3430" transform="rotate(27 101.5 44.1)"/><ellipse cx="81.1" cy="99.9" rx="2.6" ry="1.1" fill="#2e2a26" transform="rotate(115 81.1 99.9)"/><ellipse cx="28.6" cy="114.8" rx="2.7" ry="0.8" fill="#8a8078" transform="rotate(154 28.6 114.8)"/><ellipse cx="70.7" cy="77.0" rx="3.1" ry="1.4" fill="#55504a" transform="rotate(26 70.7 77.0)"/><ellipse cx="75.3" cy="28.5" rx="2.1" ry="2.0" fill="#55504a" transform="rotate(126 75.3 28.5)"/><ellipse cx="76.4" cy="69.3" rx="2.1" ry="1.8" fill="#251f1a" transform="rotate(158 76.4 69.3)"/><ellipse cx="71.4" cy="111.5" rx="3.2" ry="1.7" fill="#6a625a" transform="rotate(82 71.4 111.5)"/><ellipse cx="26.5" cy="96.7" rx="3.7" ry="1.1" fill="#251f1a" transform="rotate(72 26.5 96.7)"/><ellipse cx="64.2" cy="52.5" rx="2.6" ry="1.4" fill="#8a8078" transform="rotate(112 64.2 52.5)"/><ellipse cx="52.9" cy="92.8" rx="3.7" ry="2.1" fill="#2e2a26" transform="rotate(59 52.9 92.8)"/><ellipse cx="39.6" cy="76.0" rx="3.9" ry="0.9" fill="#3a3430" transform="rotate(98 39.6 76.0)"/><ellipse cx="73.1" cy="121.2" rx="2.0" ry="1.3" fill="#8a8078" transform="rotate(152 73.1 121.2)"/><ellipse cx="55.2" cy="98.3" rx="2.8" ry="1.7" fill="#55504a" transform="rotate(149 55.2 98.3)"/><ellipse cx="35.0" cy="100.7" rx="2.6" ry="2.2" fill="#55504a" transform="rotate(33 35.0 100.7)"/><ellipse cx="77.8" cy="40.0" rx="4.0" ry="1.3" fill="#6a625a" transform="rotate(10 77.8 40.0)"/><ellipse cx="38.9" cy="34.0" rx="1.7" ry="2.1" fill="#251f1a" transform="rotate(113 38.9 34.0)"/><ellipse cx="35.9" cy="54.0" rx="2.1" ry="1.8" fill="#55504a" transform="rotate(169 35.9 54.0)"/><ellipse cx="99.1" cy="125.4" rx="3.9" ry="1.4" fill="#2e2a26" transform="rotate(30 99.1 125.4)"/><ellipse cx="82.6" cy="90.2" rx="2.7" ry="1.6" fill="#3a3430" transform="rotate(41 82.6 90.2)"/><ellipse cx="36.0" cy="90.6" rx="3.5" ry="1.9" fill="#6a625a" transform="rotate(84 36.0 90.6)"/><ellipse cx="77.5" cy="91.7" rx="3.4" ry="1.5" fill="#3a3430" transform="rotate(141 77.5 91.7)"/><ellipse cx="27.3" cy="64.9" rx="2.1" ry="1.4" fill="#2e2a26" transform="rotate(33 27.3 64.9)"/><ellipse cx="82.2" cy="106.3" rx="2.4" ry="1.7" fill="#8a8078" transform="rotate(58 82.2 106.3)"/><ellipse cx="43.7" cy="90.5" rx="3.1" ry="1.3" fill="#8a8078" transform="rotate(167 43.7 90.5)"/><ellipse cx="5.8" cy="109.1" rx="3.8" ry="1.9" fill="#6a625a" transform="rotate(25 5.8 109.1)"/><ellipse cx="64.6" cy="29.5" rx="1.5" ry="2.1" fill="#6a625a" transform="rotate(118 64.6 29.5)"/><ellipse cx="62.0" cy="84.7" rx="3.6" ry="1.1" fill="#3a3430" transform="rotate(81 62.0 84.7)"/></g>
<g filter="url(#bl1)">
<path d="M40 52 Q30 62 31 90 Q28 112 32 126 L88 126 Q92 108 89 88 Q86 62 76 50 Z" fill="#d98a3c"/>
<path d="M30 96 Q34 80 42 76 L44 112 Z M88 94 Q84 80 76 76 L74 112 Z" fill="#c8772a"/>
<path d="M48 50 Q42 64 47 84 Q52 96 60 98 Q68 96 72 82 Q76 64 70 50 Z" fill="#f4f2ec"/>
<path d="M50 96 L48 126 L58 126 L58 98 Z M62 98 L63 126 L72 126 L70 96 Z" fill="#f4f2ee"/>
<path d="M41 30 Q41 19 59 19 Q77 19 77 31 Q77 47 60 51 Q43 48 41 30 Z" fill="#d98a3c"/>
<path d="M42 25 L40 12 L52 19 Z M75 24 L78 11 L68 19 Z" fill="#d0803a"/>
<path d="M52 33 Q59 28 66 33 Q67 44 60 51 Q52 46 52 33 Z" fill="#f2f0ea"/>
<circle cx="52.5" cy="31" r="1.4" fill="#7a8a40"/><circle cx="65" cy="31" r="1.4" fill="#7a8a40"/>
<path d="M33 84 L43 86 M32 98 L43 100 M77 86 L87 84 M77 100 L88 98 M44 66 L48 70 M74 66 L70 70" stroke="#b86a28" stroke-width="2"/>
</g>
</svg>
<svg class="a" style="left:1002.6px;top:624.2px" width="133.4" height="126" viewBox="0 0 133.4 126">
<rect width="134" height="126" fill="#dddbd7"/>
<g filter="url(#bl1)">
<ellipse cx="56" cy="112" rx="58" ry="16" fill="#d8cdb2"/>
<ellipse cx="56" cy="106" rx="52" ry="8" fill="#e2d8c0"/>
<path d="M30 98 Q26 74 50 62 Q74 50 90 40 Q108 34 109 54 Q108 78 106 102 L97 104 L95 76 Q86 92 78 100 Q58 108 30 98 Z" fill="#ece6de"/>
<path d="M36 90 Q46 100 64 102 L78 100 L70 104 Q50 106 36 100 Z" fill="#d8d0c8"/>
<path d="M88 28 Q88 15 100 15 Q113 15 113 28 Q112 42 100 44 Q89 42 88 28 Z" fill="#e6ddd2"/>
<path d="M93 31 Q100 27 107 31 Q106 42 100 44 Q94 42 93 31 Z" fill="#867468"/>
<path d="M86 25 L83 6 L96 17 Z M113 23 L118 6 L105 17 Z" fill="#6a5446"/>
<circle cx="95" cy="28" r="1.6" fill="#5a9ad0"/><circle cx="105" cy="28" r="1.6" fill="#5a9ad0"/>
<path d="M32 98 Q24 108 30 126" stroke="#5a4a40" stroke-width="6" fill="none"/>
<path d="M70 103 L88 103 M96 104 L106 103" stroke="#a0908a" stroke-width="4"/>
</g>
</svg>
<div class="a nw " style="left:1181.30px;top:270.63px;font-size:12.6px;line-height:20px;font-family:'Liberation Sans',sans-serif;font-weight:bold;color:#202122">Appearance</div>
<div class="a" style="left:1265px;top:270.5px;width:35px;height:19.5px;background:#eaecf0;border-radius:2px"></div>
<div class="a nw " style="left:1272.30px;top:270.62px;font-size:11.2px;line-height:20px;font-family:'Liberation Sans',sans-serif;color:#202122">hide</div>
<div class="a" style="left:1181px;top:296.5px;width:149.5px;height:1px;background:#eaecf0"></div>
<div class="a nw " style="left:1181.50px;top:305.63px;font-size:12.6px;line-height:20px;font-family:'Liberation Sans',sans-serif;color:#54595d">Text</div>
<div class="a" style="left:1181px;top:329px;width:149.5px;height:1px;background:#eaecf0"></div>
<div class="a" style="left:1181px;top:340.0px;width:18.6px;height:18.6px;border-radius:50%;border:1px solid #72777d;background:#fff"></div>
<div class="a nw " style="left:1207.00px;top:339.33px;font-size:12.6px;line-height:20px;font-family:'Liberation Sans',sans-serif;color:#202122">Small</div>
<div class="a" style="left:1181px;top:369.2px;width:18.6px;height:18.6px;border-radius:50%;border:5.5px solid #3366cc;background:#fff"></div>
<div class="a nw " style="left:1207.00px;top:368.53px;font-size:12.6px;line-height:20px;font-family:'Liberation Sans',sans-serif;color:#202122">Standard</div>
<div class="a" style="left:1181px;top:398.4px;width:18.6px;height:18.6px;border-radius:50%;border:1px solid #72777d;background:#fff"></div>
<div class="a nw " style="left:1207.00px;top:397.73px;font-size:12.6px;line-height:20px;font-family:'Liberation Sans',sans-serif;color:#202122">Large</div>
<div class="a nw " style="left:1181.50px;top:430.93px;font-size:12.6px;line-height:20px;font-family:'Liberation Sans',sans-serif;color:#54595d">Width</div>
<div class="a" style="left:1181px;top:454.5px;width:149.5px;height:1px;background:#eaecf0"></div>
<div class="a" style="left:1181px;top:465.0px;width:18.6px;height:18.6px;border-radius:50%;border:5.5px solid #3366cc;background:#fff"></div>
<div class="a nw " style="left:1207.00px;top:464.33px;font-size:12.6px;line-height:20px;font-family:'Liberation Sans',sans-serif;color:#202122">Standard</div>
<div class="a" style="left:1181px;top:494.2px;width:18.6px;height:18.6px;border-radius:50%;border:1px solid #72777d;background:#fff"></div>
<div class="a nw " style="left:1207.00px;top:493.53px;font-size:12.6px;line-height:20px;font-family:'Liberation Sans',sans-serif;color:#202122">Wide</div>
<div class="a nw " style="left:1181.50px;top:527.63px;font-size:12.6px;line-height:20px;font-family:'Liberation Sans',sans-serif;color:#54595d">Color (beta)</div>
<div class="a" style="left:1181px;top:550.5px;width:149.5px;height:1px;background:#eaecf0"></div>
<div class="a" style="left:1181px;top:561.2px;width:18.6px;height:18.6px;border-radius:50%;border:1px solid #72777d;background:#fff"></div>
<div class="a nw " style="left:1207.00px;top:560.53px;font-size:12.6px;line-height:20px;font-family:'Liberation Sans',sans-serif;color:#202122">Automatic</div>
<div class="a" style="left:1181px;top:590.4000000000001px;width:18.6px;height:18.6px;border-radius:50%;border:5.5px solid #3366cc;background:#fff"></div>
<div class="a nw " style="left:1207.00px;top:589.73px;font-size:12.6px;line-height:20px;font-family:'Liberation Sans',sans-serif;color:#202122">Light</div>
<div class="a" style="left:1181px;top:619.6px;width:18.6px;height:18.6px;border-radius:50%;border:1px solid #72777d;background:#fff"></div>
<div class="a nw " style="left:1207.00px;top:618.93px;font-size:12.6px;line-height:20px;font-family:'Liberation Sans',sans-serif;color:#202122">Dark</div>
<div class="a" style="left:616.2px;top:420.6px;width:328.8px;height:172.4px;background:#27272c;border-radius:10px;box-shadow:0 3px 12px rgba(0,0,0,0.22)"></div>
<div class="a nw " style="left:638.00px;top:431.28px;font-size:13.6px;line-height:20px;font-family:'Liberation Sans',sans-serif;color:#fff;letter-spacing:-0.15px;-webkit-text-stroke:0.35px #fff">қазақ</div>
<svg class="a" style="left:725px;top:435px;" width="14" height="12" viewBox="0 0 14 12"><path d="M2 3.5 L7 8.5 L12 3.5" fill="none" stroke="#e8e8ea" stroke-width="1.4"/></svg>
<svg class="a" style="left:883px;top:434px;" width="18" height="15" viewBox="0 0 18 15"><rect x="1.6" y="1.8" width="14.8" height="11.4" rx="2.6" fill="none" stroke="#e8e8ea" stroke-width="1.3"/><path d="M11 2 V13" stroke="#e8e8ea" stroke-width="1.3"/></svg>
<svg class="a" style="left:918px;top:434px;" width="14" height="14" viewBox="0 0 14 14"><path d="M2 2.5 L12 12.5 M12 2.5 L2 12.5" stroke="#e8e8ea" stroke-width="1.4"/></svg>
<div class="a nw " style="left:638.60px;top:477.22px;font-size:13.2px;line-height:20px;font-family:'Liberation Sans',sans-serif;color:#f4f4f6;letter-spacing:-0.1px;-webkit-text-stroke:0.2px #f4f4f6">қолға үйретілген</div>
<div class="a" style="left:638px;top:553px;width:285px;height:1px;background:#43434a"></div>
<svg class="a" style="left:639px;top:566px;" width="16" height="14" viewBox="0 0 16 14"><path d="M12.2 1.5 Q13 8.5 3.5 9.2 M6.8 5.8 L3.3 9.2 L6.3 12.6" fill="none" stroke="#6e6e74" stroke-width="1.3"/></svg>
<div class="a nw " style="left:661.00px;top:563.06px;font-size:13.1px;line-height:20px;font-family:'Liberation Sans',sans-serif;color:#6f6f75">Мәтінді енгізу</div>
<svg class="a" style="left:910px;top:565px;" width="16" height="16" viewBox="0 0 16 16"><rect x="1.8" y="5.8" width="8.2" height="8.2" rx="2.2" fill="#27272c" stroke="#f0f0f2" stroke-width="1.5"/><rect x="5.8" y="1.8" width="8.2" height="8.2" rx="2.2" fill="#27272c" stroke="#f0f0f2" stroke-width="1.5"/></svg>
</body></html>
